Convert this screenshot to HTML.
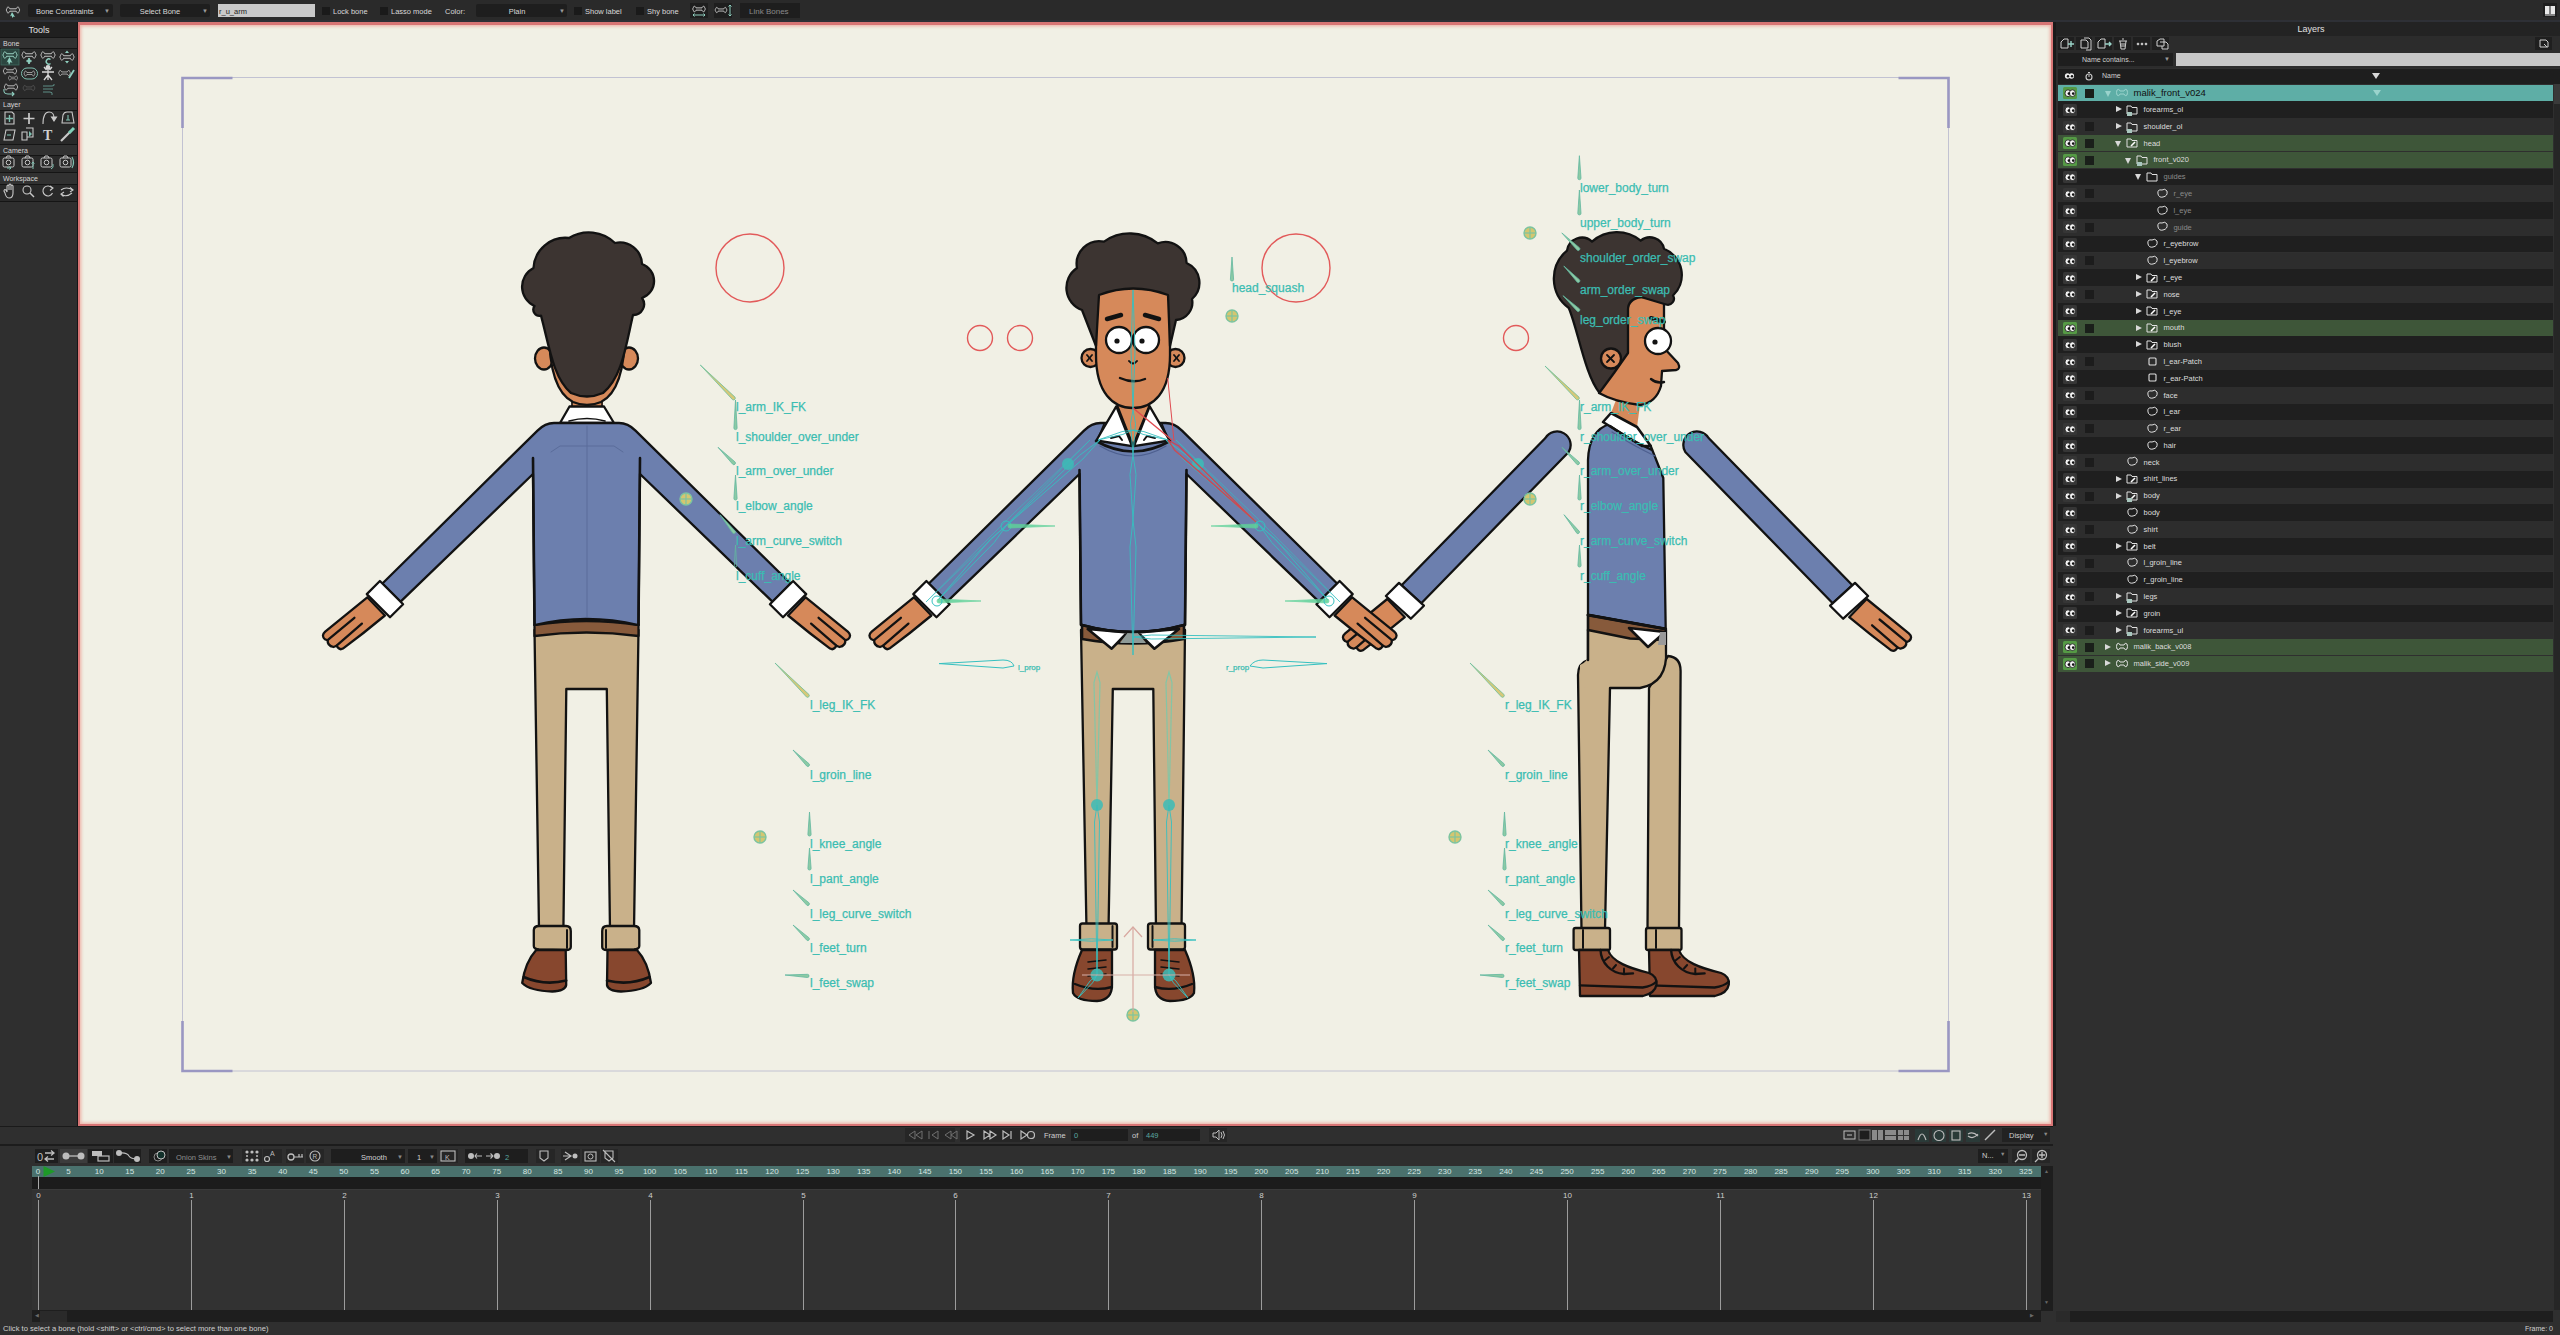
<!DOCTYPE html>
<html><head><meta charset="utf-8"><style>
html,body{margin:0;padding:0;}
body{width:2560px;height:1335px;position:relative;overflow:hidden;background:#2f2f2f;font-family:"Liberation Sans", sans-serif;}
</style></head><body>
<div style="position:absolute;left:0px;top:0px;width:2560px;height:20px;background:#2a2a2a;"></div><div style="position:absolute;left:0px;top:20px;width:2560px;height:2px;background:#2e3036;"></div><div style="position:absolute;left:28px;top:4px;width:85px;height:13px;background:#1e1e1e;border-radius:2px"></div><div style="position:absolute;left:36px;top:6.5px;font-size:7.5px;line-height:9.5px;color:#d8d8d8;white-space:nowrap;">Bone Constraints</div><div style="position:absolute;left:104px;top:6.5px;font-size:6px;line-height:8px;color:#9a9a9a;white-space:nowrap;">&#9660;</div><div style="position:absolute;left:120px;top:4px;width:90px;height:13px;background:#1e1e1e;border-radius:2px"></div><div style="position:absolute;left:120.0px;top:6.5px;width:80px;text-align:center;font-size:7.5px;line-height:9.5px;color:#d8d8d8;white-space:nowrap;">Select Bone</div><div style="position:absolute;left:202px;top:6.5px;font-size:6px;line-height:8px;color:#9a9a9a;white-space:nowrap;">&#9660;</div><div style="position:absolute;left:218px;top:4px;width:97px;height:13px;background:#c9c9c9;"></div><div style="position:absolute;left:219px;top:6.5px;font-size:7.5px;line-height:9.5px;color:#222;white-space:nowrap;">r_u_arm</div><div style="position:absolute;left:322px;top:6.5px;width:8px;height:8px;background:#1a1a1a;"></div><div style="position:absolute;left:333px;top:6.5px;font-size:7.5px;line-height:9.5px;color:#d8d8d8;white-space:nowrap;">Lock bone</div><div style="position:absolute;left:380px;top:6.5px;width:8px;height:8px;background:#1a1a1a;"></div><div style="position:absolute;left:391px;top:6.5px;font-size:7.5px;line-height:9.5px;color:#d8d8d8;white-space:nowrap;">Lasso mode</div><div style="position:absolute;left:574px;top:6.5px;width:8px;height:8px;background:#1a1a1a;"></div><div style="position:absolute;left:585px;top:6.5px;font-size:7.5px;line-height:9.5px;color:#d8d8d8;white-space:nowrap;">Show label</div><div style="position:absolute;left:636px;top:6.5px;width:8px;height:8px;background:#1a1a1a;"></div><div style="position:absolute;left:647px;top:6.5px;font-size:7.5px;line-height:9.5px;color:#d8d8d8;white-space:nowrap;">Shy bone</div><div style="position:absolute;left:445px;top:6.5px;font-size:7.5px;line-height:9.5px;color:#d8d8d8;white-space:nowrap;">Color:</div><div style="position:absolute;left:476px;top:4px;width:91px;height:13px;background:#1e1e1e;border-radius:2px"></div><div style="position:absolute;left:487.0px;top:6.5px;width:60px;text-align:center;font-size:7.5px;line-height:9.5px;color:#d8d8d8;white-space:nowrap;">Plain</div><div style="position:absolute;left:559px;top:6.5px;font-size:6px;line-height:8px;color:#9a9a9a;white-space:nowrap;">&#9660;</div><div style="position:absolute;left:690px;top:3px;width:18px;height:15px;background:#1e1e1e;"></div><div style="position:absolute;left:714px;top:3px;width:18px;height:15px;background:#1e1e1e;"></div><div style="position:absolute;left:740px;top:3px;width:60px;height:15px;background:#1e1e1e;"></div><div style="position:absolute;left:749px;top:6.5px;font-size:8px;line-height:10px;color:#8a8a8a;white-space:nowrap;">Link Bones</div><div style="position:absolute;left:2543px;top:3px;width:14px;height:14px;background:#1e1e1e;"></div><svg style="position:absolute;left:5px;top:4px" width="18" height="14"><path transform="translate(8,6) scale(0.8)" d="M-4,-1.5 L4,-1.5 C4.5,-4 7.5,-4.5 7.5,-2 C8.5,-1 8.5,1 7.5,2 C7.5,4.5 4.5,4 4,1.5 L-4,1.5 C-4.5,4 -7.5,4.5 -7.5,2 C-8.5,1 -8.5,-1 -7.5,-2 C-7.5,-4.5 -4.5,-4 -4,-1.5 Z" fill="none" stroke="#c9c9c9" stroke-width="1.2"/><path d="M7,8 L10,13 L8.5,12.5 L7.5,14 L6.5,11.5 L5,12.5 Z" fill="#8fd0c0"/></svg><svg style="position:absolute;left:690px;top:3px" width="44" height="15"><path transform="translate(9,6) scale(0.75)" d="M-4,-1.5 L4,-1.5 C4.5,-4 7.5,-4.5 7.5,-2 C8.5,-1 8.5,1 7.5,2 C7.5,4.5 4.5,4 4,1.5 L-4,1.5 C-4.5,4 -7.5,4.5 -7.5,2 C-8.5,1 -8.5,-1 -7.5,-2 C-7.5,-4.5 -4.5,-4 -4,-1.5 Z" fill="none" stroke="#c9c9c9" stroke-width="1.3"/><path d="M3,12 L15,12 M4.5,10.5 L3,12 L4.5,13.5 M13.5,10.5 L15,12 L13.5,13.5" stroke="#8fd0c0" fill="none" stroke-width="1"/><path transform="translate(31,7) scale(0.7)" d="M-4,-1.5 L4,-1.5 C4.5,-4 7.5,-4.5 7.5,-2 C8.5,-1 8.5,1 7.5,2 C7.5,4.5 4.5,4 4,1.5 L-4,1.5 C-4.5,4 -7.5,4.5 -7.5,2 C-8.5,1 -8.5,-1 -7.5,-2 C-7.5,-4.5 -4.5,-4 -4,-1.5 Z" fill="none" stroke="#c9c9c9" stroke-width="1.3"/><path d="M40,2 L40,13 M38.5,3.5 L40,2 L41.5,3.5 M38.5,11.5 L40,13 L41.5,11.5" stroke="#8fd0c0" fill="none" stroke-width="1"/></svg><svg style="position:absolute;left:2543px;top:3px" width="14" height="14"><rect x="0" y="0" width="14" height="14" fill="#1e1e1e"/><path d="M2,3 L6.5,3 L6.5,11 L2,11 Z M7.5,3 L12,3 L12,11 L7.5,11 Z" fill="#e8e8e8"/><path d="M2,12 L12,12" stroke="#e8e8e8"/></svg><div style="position:absolute;left:0px;top:22px;width:77px;height:1104px;background:#2f2f2f;"></div><div style="position:absolute;left:0px;top:22px;width:77px;height:15px;background:#202020;"></div><div style="position:absolute;left:4.0px;top:25px;width:70px;text-align:center;font-size:9px;line-height:11px;color:#e0e0e0;white-space:nowrap;">Tools</div><div style="position:absolute;left:77px;top:22px;width:1px;height:1104px;background:#161616;"></div><div style="position:absolute;left:0px;top:37px;width:77px;height:1px;background:#151515;"></div><div style="position:absolute;left:0px;top:38px;width:77px;height:10px;background:#313131;"></div><div style="position:absolute;left:3px;top:38.5px;font-size:7px;line-height:9px;color:#d6d6d6;white-space:nowrap;">Bone</div><div style="position:absolute;left:0px;top:48px;width:77px;height:1px;background:#151515;"></div><div style="position:absolute;left:0px;top:49px;width:77px;height:49px;background:#292929;"></div><div style="position:absolute;left:0px;top:98px;width:77px;height:1px;background:#151515;"></div><div style="position:absolute;left:0px;top:99px;width:77px;height:11px;background:#313131;"></div><div style="position:absolute;left:3px;top:99.5px;font-size:7px;line-height:9px;color:#d6d6d6;white-space:nowrap;">Layer</div><div style="position:absolute;left:0px;top:110px;width:77px;height:1px;background:#151515;"></div><div style="position:absolute;left:0px;top:111px;width:77px;height:33px;background:#292929;"></div><div style="position:absolute;left:0px;top:144px;width:77px;height:1px;background:#151515;"></div><div style="position:absolute;left:0px;top:145px;width:77px;height:10px;background:#313131;"></div><div style="position:absolute;left:3px;top:145.5px;font-size:7px;line-height:9px;color:#d6d6d6;white-space:nowrap;">Camera</div><div style="position:absolute;left:0px;top:155px;width:77px;height:1px;background:#151515;"></div><div style="position:absolute;left:0px;top:156px;width:77px;height:16px;background:#292929;"></div><div style="position:absolute;left:0px;top:172px;width:77px;height:1px;background:#151515;"></div><div style="position:absolute;left:0px;top:173px;width:77px;height:11px;background:#313131;"></div><div style="position:absolute;left:3px;top:173.5px;font-size:7px;line-height:9px;color:#d6d6d6;white-space:nowrap;">Workspace</div><div style="position:absolute;left:0px;top:184px;width:77px;height:1px;background:#151515;"></div><div style="position:absolute;left:0px;top:185px;width:77px;height:16px;background:#292929;"></div><div style="position:absolute;left:0px;top:201px;width:77px;height:1px;background:#151515;"></div><svg style="position:absolute;left:0;top:0" width="78" height="205"><rect x="1" y="49" width="18" height="16" fill="#2c4640" stroke="#3f6a60" stroke-width="0.8"/><path transform="translate(10,55) scale(0.85)" d="M-4,-1.5 L4,-1.5 C4.5,-4 7.5,-4.5 7.5,-2 C8.5,-1 8.5,1 7.5,2 C7.5,4.5 4.5,4 4,1.5 L-4,1.5 C-4.5,4 -7.5,4.5 -7.5,2 C-8.5,1 -8.5,-1 -7.5,-2 C-7.5,-4.5 -4.5,-4 -4,-1.5 Z" fill="none" stroke="#9fd8c8" stroke-width="1.1"/><path d="M9.5,57 L12.5,63 L10.5,62 L9,65 L8,61.5 L6.5,62.5 Z" fill="#8fd0c0"/><path transform="translate(29,55) scale(0.85)" d="M-4,-1.5 L4,-1.5 C4.5,-4 7.5,-4.5 7.5,-2 C8.5,-1 8.5,1 7.5,2 C7.5,4.5 4.5,4 4,1.5 L-4,1.5 C-4.5,4 -7.5,4.5 -7.5,2 C-8.5,1 -8.5,-1 -7.5,-2 C-7.5,-4.5 -4.5,-4 -4,-1.5 Z" fill="none" stroke="#c9c9c9" stroke-width="1.1"/><path d="M29,58 L30.5,61 L29,64 L27.5,61 Z M26,61 L32,61" fill="#8fd0c0" stroke="#8fd0c0" stroke-width="1"/><path transform="translate(48,55) scale(0.85)" d="M-4,-1.5 L4,-1.5 C4.5,-4 7.5,-4.5 7.5,-2 C8.5,-1 8.5,1 7.5,2 C7.5,4.5 4.5,4 4,1.5 L-4,1.5 C-4.5,4 -7.5,4.5 -7.5,2 C-8.5,1 -8.5,-1 -7.5,-2 C-7.5,-4.5 -4.5,-4 -4,-1.5 Z" fill="none" stroke="#c9c9c9" stroke-width="1.1"/><path d="M50.5,59.5 A2.6,2.6 0 1 0 50.5,63.5" fill="none" stroke="#8fd0c0" stroke-width="1.4"/><path transform="translate(67,57) scale(0.85)" d="M-4,-1.5 L4,-1.5 C4.5,-4 7.5,-4.5 7.5,-2 C8.5,-1 8.5,1 7.5,2 C7.5,4.5 4.5,4 4,1.5 L-4,1.5 C-4.5,4 -7.5,4.5 -7.5,2 C-8.5,1 -8.5,-1 -7.5,-2 C-7.5,-4.5 -4.5,-4 -4,-1.5 Z" fill="none" stroke="#c9c9c9" stroke-width="1.1"/><path d="M67,50.5 L69,53 L65,53 Z M67,63.5 L69,61 L65,61 Z" fill="#8fd0c0"/><path transform="translate(10,71) scale(0.8)" d="M-4,-1.5 L4,-1.5 C4.5,-4 7.5,-4.5 7.5,-2 C8.5,-1 8.5,1 7.5,2 C7.5,4.5 4.5,4 4,1.5 L-4,1.5 C-4.5,4 -7.5,4.5 -7.5,2 C-8.5,1 -8.5,-1 -7.5,-2 C-7.5,-4.5 -4.5,-4 -4,-1.5 Z" fill="none" stroke="#c9c9c9" stroke-width="1.1"/><path transform="translate(13,78) scale(0.55)" d="M-4,-1.5 L4,-1.5 C4.5,-4 7.5,-4.5 7.5,-2 C8.5,-1 8.5,1 7.5,2 C7.5,4.5 4.5,4 4,1.5 L-4,1.5 C-4.5,4 -7.5,4.5 -7.5,2 C-8.5,1 -8.5,-1 -7.5,-2 C-7.5,-4.5 -4.5,-4 -4,-1.5 Z" fill="none" stroke="#c9c9c9" stroke-width="1.1"/><rect x="21.5" y="68" width="16" height="11" rx="5.5" fill="none" stroke="#7fbfb0" stroke-width="1"/><path transform="translate(29.5,73.5) scale(0.65)" d="M-4,-1.5 L4,-1.5 C4.5,-4 7.5,-4.5 7.5,-2 C8.5,-1 8.5,1 7.5,2 C7.5,4.5 4.5,4 4,1.5 L-4,1.5 C-4.5,4 -7.5,4.5 -7.5,2 C-8.5,1 -8.5,-1 -7.5,-2 C-7.5,-4.5 -4.5,-4 -4,-1.5 Z" fill="none" stroke="#c9c9c9" stroke-width="1.1"/><g stroke="#d8d8d8" stroke-width="1.3" fill="none"><circle cx="48" cy="67.5" r="1.8" fill="#d8d8d8"/><path d="M42,72 L54,72 M48,70 L48,80 M48,75 L44,80 M48,75 L52,80 M44,67 L46.5,70 M52,67 L49.5,70"/></g><path transform="translate(64.5,73) scale(0.7)" d="M-4,-1.5 L4,-1.5 C4.5,-4 7.5,-4.5 7.5,-2 C8.5,-1 8.5,1 7.5,2 C7.5,4.5 4.5,4 4,1.5 L-4,1.5 C-4.5,4 -7.5,4.5 -7.5,2 C-8.5,1 -8.5,-1 -7.5,-2 C-7.5,-4.5 -4.5,-4 -4,-1.5 Z" fill="none" stroke="#c9c9c9" stroke-width="1.1"/><path d="M69,78 L74,70" stroke="#8fcfc0" stroke-width="1.8"/><path transform="translate(11,87) scale(0.8)" d="M-4,-1.5 L4,-1.5 C4.5,-4 7.5,-4.5 7.5,-2 C8.5,-1 8.5,1 7.5,2 C7.5,4.5 4.5,4 4,1.5 L-4,1.5 C-4.5,4 -7.5,4.5 -7.5,2 C-8.5,1 -8.5,-1 -7.5,-2 C-7.5,-4.5 -4.5,-4 -4,-1.5 Z" fill="none" stroke="#c9c9c9" stroke-width="1.1"/><path d="M4,89 Q3,94 8,94 L14,94 M12,92 L14,94 L12,96" fill="none" stroke="#8fcfc0" stroke-width="1.1"/><g opacity="0.3"><path transform="translate(29,88) scale(0.7)" d="M-4,-1.5 L4,-1.5 C4.5,-4 7.5,-4.5 7.5,-2 C8.5,-1 8.5,1 7.5,2 C7.5,4.5 4.5,4 4,1.5 L-4,1.5 C-4.5,4 -7.5,4.5 -7.5,2 C-8.5,1 -8.5,-1 -7.5,-2 C-7.5,-4.5 -4.5,-4 -4,-1.5 Z" fill="none" stroke="#c9c9c9" stroke-width="1.1"/></g><path d="M43,86 L52,86 Q55,86 54,84 M43,89 L53,89 M43,92 L50,92 Q53,92 52,95" fill="none" stroke="#5f8f87" stroke-width="1"/><g fill="none" stroke="#c9c9c9" stroke-width="1.1"><path d="M5,112 L12,112 L14,114 L14,124 L5,124 Z"/><path d="M9.5,115 L9.5,122 M6,118.5 L13,118.5" stroke="#7fbfb0" stroke-width="1.4"/><path d="M29,113 L29,124 M23.5,118.5 L34.5,118.5" stroke-width="1.7"/><path d="M43,124 Q43,112 49,112 Q54,112 54,118" /><path d="M51.5,117 L54,121 L56.5,117 Z" fill="#c9c9c9"/><path d="M62,123 L63,115 Q64,112 67,112 L72,112 L74,123 Z"/><path d="M68,115 L68,120 M66,120 L70,120" stroke="#7fbfb0"/><path d="M4,140 L6,130 L15,130 L13,140 Z"/><path d="M7,135 L11,135" stroke="#7fbfb0"/><path d="M22,132 L27,132 L27,140 L22,140 Z M26,128 L33,128 L33,137 L27,137"/><path d="M29,131 L32,134 L29,137 Z" fill="#7fbfb0" stroke="none"/></g><text x="43" y="140" font-family="Liberation Serif, serif" font-size="14" font-weight="bold" fill="#d0d0d0">T</text><path d="M61,141 L71,131" stroke="#c9c9c9" stroke-width="2.2"/><path d="M69,133 L74,128" stroke="#7fcfb8" stroke-width="3"/><g fill="none" stroke="#c9c9c9" stroke-width="1"><rect x="3" y="158" width="11" height="9" rx="1.5"/><circle cx="8.5" cy="162.5" r="2.3"/><path d="M6,158 L7,156 L10,156 L11,158"/></g><g fill="none" stroke="#c9c9c9" stroke-width="1"><rect x="22" y="158" width="11" height="9" rx="1.5"/><circle cx="27.5" cy="162.5" r="2.3"/><path d="M25,158 L26,156 L29,156 L30,158"/></g><g fill="none" stroke="#c9c9c9" stroke-width="1"><rect x="41" y="158" width="11" height="9" rx="1.5"/><circle cx="46.5" cy="162.5" r="2.3"/><path d="M44,158 L45,156 L48,156 L49,158"/></g><g fill="none" stroke="#c9c9c9" stroke-width="1"><rect x="60" y="158" width="11" height="9" rx="1.5"/><circle cx="65.5" cy="162.5" r="2.3"/><path d="M63,158 L64,156 L67,156 L68,158"/></g><path d="M7,168 L11,168 M9.5,166.5 L11,168 L9.5,169.5" stroke="#7fbfb0" fill="none"/><path d="M33,162 L33,169 M31.5,163.5 L33,162 L34.5,163.5" stroke="#7fbfb0" fill="none"/><path d="M51,169 Q54,168 53,164" stroke="#7fbfb0" fill="none"/><path d="M72,157 Q75,162.5 72,168" stroke="#7fbfb0" fill="none" stroke-width="1.2"/><g fill="none" stroke="#c9c9c9" stroke-width="1.1"><path d="M5,193 L4,191 Q4,189 6,190 L7,192 L7,186 Q8,184 9,186 L9,190 L9,185 Q10,183 11,185 L11,190 L11,186 Q12,184 13,186 L13,193 Q13,198 9,198 Q6,198 5,193 Z"/><circle cx="27" cy="190" r="4"/><path d="M30,193 L34,197" stroke-width="1.5"/><path d="M52,188 A5,5 0 1 0 52.5,193"/><path d="M50,186 L53,188 L50,190.5" /><path d="M61,194 Q66,198 72,193 M61,190 Q66,186 73,190"/><path d="M70,187.5 L73,190 L70,192" /><path d="M63.5,196.5 L61,194 L64,192"/></g></svg><div style="position:absolute;left:78px;top:22px;width:1975px;height:1104px;background:#f1f0e5;border:2.5px solid #d87575;box-sizing:border-box;border-top-width:3.5px;box-shadow:inset 0 0 3px 1.5px rgba(238,165,155,0.75)"></div><div style="position:absolute;left:2053px;top:22px;width:507px;height:1298px;background:#2f2f2f;"></div><div style="position:absolute;left:2053px;top:22px;width:3px;height:1104px;background:#1a1a1a;"></div><div style="position:absolute;left:2056px;top:22px;width:504px;height:14px;background:#232323;"></div><div style="position:absolute;left:2271.0px;top:24px;width:80px;text-align:center;font-size:9px;line-height:11px;color:#e0e0e0;white-space:nowrap;">Layers</div><div style="position:absolute;left:2056px;top:36px;width:504px;height:16px;background:#2c2c2c;"></div><div style="position:absolute;left:2058px;top:37px;width:16px;height:13px;background:#1f1f1f;"></div><div style="position:absolute;left:2076px;top:37px;width:16px;height:13px;background:#1f1f1f;"></div><div style="position:absolute;left:2095px;top:37px;width:17px;height:13px;background:#1f1f1f;"></div><div style="position:absolute;left:2114px;top:37px;width:17px;height:13px;background:#1f1f1f;"></div><div style="position:absolute;left:2133px;top:37px;width:17px;height:13px;background:#1f1f1f;"></div><div style="position:absolute;left:2152px;top:37px;width:17px;height:13px;background:#1f1f1f;"></div><div style="position:absolute;left:2535px;top:37px;width:17px;height:13px;background:#1f1f1f;"></div><svg style="position:absolute;left:2056px;top:36px" width="120" height="16" fill="none" stroke="#cfcfcf" stroke-width="1"><path d="M5,12 L5,6 L8,3 L12,3 L12,12 Z"/><path d="M12,8 L18,8 M15,5 L15,11" stroke="#9ad3c8" stroke-width="1.4"/><path d="M25,4 L30,4 L32,6 L32,12 L25,12 Z M28,2 L33,2 L35,4 L35,14 L30,14"/><path d="M42,12 L42,6 L45,3 L49,3 L49,12 Z"/><path d="M49,8 L55,8 M53,6 L55,8 L53,10" stroke="#9ad3c8" stroke-width="1.4"/><path d="M63,5 L71,5 M64,5 L65,13 L69,13 L70,5 M66,3 L68,3 M66,7 L66,11 M68,7 L68,11"/><circle cx="82" cy="8" r="0.9" fill="#cfcfcf"/><circle cx="86" cy="8" r="0.9" fill="#cfcfcf"/><circle cx="90" cy="8" r="0.9" fill="#cfcfcf"/><path d="M101,10 L101,5 L104,3 L108,3 L108,10 Z M104,6 L110,6 L112,8 L112,13 L106,13 L106,10"/></svg><svg style="position:absolute;left:2537px;top:37px" width="14" height="13" fill="none" stroke="#cfcfcf" stroke-width="1"><path d="M3,3 L9,3 L11,5 L11,10 L3,10 Z M7,7 L10,10"/></svg><div style="position:absolute;left:2056px;top:52px;width:504px;height:16px;background:#2c2c2c;"></div><div style="position:absolute;left:2058px;top:53px;width:115px;height:13px;background:#1e1e1e;"></div><div style="position:absolute;left:2082px;top:55px;font-size:7px;line-height:9px;color:#d0d0d0;white-space:nowrap;">Name contains...</div><div style="position:absolute;left:2164px;top:55px;font-size:6px;line-height:8px;color:#9a9a9a;white-space:nowrap;">&#9660;</div><div style="position:absolute;left:2176px;top:53px;width:384px;height:13px;background:#c7c7c7;"></div><div style="position:absolute;left:2058px;top:69px;width:502px;height:15px;background:#1e1e1e;"></div><div style="position:absolute;left:2554px;top:84px;width:6px;height:1226px;background:#262626;"></div><div style="position:absolute;left:2554px;top:84px;width:6px;height:20px;background:#3a3a3a;"></div><div style="position:absolute;left:2102px;top:71px;font-size:7px;line-height:9px;color:#cfcfcf;white-space:nowrap;">Name</div><svg style="position:absolute;left:2063px;top:70px" width="34" height="12"><ellipse cx="4.5" cy="6" rx="2.6" ry="2.8" fill="#eee"/><ellipse cx="8.5" cy="6" rx="2.6" ry="2.8" fill="#eee"/><circle cx="5" cy="6.3" r="1.2" fill="#111"/><circle cx="9" cy="6.3" r="1.2" fill="#111"/><circle cx="26" cy="7" r="3" fill="none" stroke="#ccc" stroke-width="1.1"/><path d="M25,2.5 L27,2.5 M26,7 L26,5" stroke="#ccc"/></svg><div style="position:absolute;left:2372px;top:73px;width:0;height:0;border-left:4px solid transparent;border-right:4px solid transparent;border-top:6px solid #d8d8d8"></div><div style="position:absolute;left:2058px;top:84.6px;width:495px;height:16.8px;background:#5eaea6;"></div><div style="position:absolute;left:2063px;top:86.99499999999999px;width:14px;height:12px;background:#559a45;border-radius:1.5px"></div><svg style="position:absolute;left:2063px;top:86.99499999999999px" width="14" height="12"><ellipse cx="5" cy="6.2" rx="3" ry="3.4" fill="#f4f4f4" stroke="#111" stroke-width="0.8"/><ellipse cx="9.4" cy="6.2" rx="3" ry="3.4" fill="#f4f4f4" stroke="#111" stroke-width="0.8"/><circle cx="5.9" cy="6.6" r="1.3" fill="#111"/><circle cx="10.2" cy="6.6" r="1.3" fill="#111"/></svg><div style="position:absolute;left:2085px;top:88.5px;width:9px;height:9px;background:#1a1f1a;"></div><div style="position:absolute;left:2104.5px;top:90.5px;width:0;height:0;border-left:3.5px solid transparent;border-right:3.5px solid transparent;border-top:6px solid #9ad3cc"></div><svg style="position:absolute;left:2116px;top:86.99499999999999px" width="13" height="13"><path d="M1,3 Q3,1 4,4 L8,4 Q9,1 11,3 Q12,5.5 11,8 Q9,10 8,7 L4,7 Q3,10 1,8 Q0,5.5 1,3 Z" fill="none" stroke="#9ad3cc" stroke-width="1"/></svg><div style="position:absolute;left:2133.5px;top:87.2px;font-size:9.5px;line-height:11.5px;color:#111;white-space:nowrap;">malik_front_v024</div><div style="position:absolute;left:2373px;top:90.0px;width:0;height:0;border-left:4px solid transparent;border-right:4px solid transparent;border-top:6px solid #9ad3cc"></div><div style="position:absolute;left:2058px;top:101.4px;width:495px;height:16.8px;background:#1f1f1f;"></div><div style="position:absolute;left:2063px;top:103.78499999999998px;width:14px;height:12px;background:#363636;border-radius:1.5px"></div><svg style="position:absolute;left:2063px;top:103.78499999999998px" width="14" height="12"><ellipse cx="5" cy="6.2" rx="3" ry="3.4" fill="#f4f4f4" stroke="#111" stroke-width="0.8"/><ellipse cx="9.4" cy="6.2" rx="3" ry="3.4" fill="#f4f4f4" stroke="#111" stroke-width="0.8"/><circle cx="5.9" cy="6.6" r="1.3" fill="#111"/><circle cx="10.2" cy="6.6" r="1.3" fill="#111"/></svg><div style="position:absolute;left:2115.7px;top:106.3px;width:0;height:0;border-top:3.5px solid transparent;border-bottom:3.5px solid transparent;border-left:6px solid #d8d8d8"></div><svg style="position:absolute;left:2125.7px;top:103.78499999999998px" width="13" height="13"><path d="M1,2 L5,2 L6,3.5 L11,3.5 L11,10 L1,10 Z" fill="none" stroke="#e0e0e0" stroke-width="1"/><rect x="1" y="8" width="5" height="4" fill="#a9c7bf"/></svg><div style="position:absolute;left:2143.6px;top:105.0px;font-size:7.5px;line-height:9.5px;color:#dddddd;white-space:nowrap;">forearms_ol</div><div style="position:absolute;left:2058px;top:118.2px;width:495px;height:16.8px;background:#2d2d2d;"></div><div style="position:absolute;left:2063px;top:120.57499999999999px;width:14px;height:12px;background:#363636;border-radius:1.5px"></div><svg style="position:absolute;left:2063px;top:120.57499999999999px" width="14" height="12"><ellipse cx="5" cy="6.2" rx="3" ry="3.4" fill="#f4f4f4" stroke="#111" stroke-width="0.8"/><ellipse cx="9.4" cy="6.2" rx="3" ry="3.4" fill="#f4f4f4" stroke="#111" stroke-width="0.8"/><circle cx="5.9" cy="6.6" r="1.3" fill="#111"/><circle cx="10.2" cy="6.6" r="1.3" fill="#111"/></svg><div style="position:absolute;left:2085px;top:122.1px;width:9px;height:9px;background:#1c1c1c;"></div><div style="position:absolute;left:2115.7px;top:123.1px;width:0;height:0;border-top:3.5px solid transparent;border-bottom:3.5px solid transparent;border-left:6px solid #d8d8d8"></div><svg style="position:absolute;left:2125.7px;top:120.57499999999999px" width="13" height="13"><path d="M1,2 L5,2 L6,3.5 L11,3.5 L11,10 L1,10 Z" fill="none" stroke="#e0e0e0" stroke-width="1"/><rect x="1" y="8" width="5" height="4" fill="#a9c7bf"/></svg><div style="position:absolute;left:2143.6px;top:121.8px;font-size:7.5px;line-height:9.5px;color:#dddddd;white-space:nowrap;">shoulder_ol</div><div style="position:absolute;left:2058px;top:135.0px;width:495px;height:16.0px;background:#3e5639;"></div><div style="position:absolute;left:2063px;top:137.365px;width:14px;height:12px;background:#559a45;border-radius:1.5px"></div><svg style="position:absolute;left:2063px;top:137.365px" width="14" height="12"><ellipse cx="5" cy="6.2" rx="3" ry="3.4" fill="#f4f4f4" stroke="#111" stroke-width="0.8"/><ellipse cx="9.4" cy="6.2" rx="3" ry="3.4" fill="#f4f4f4" stroke="#111" stroke-width="0.8"/><circle cx="5.9" cy="6.6" r="1.3" fill="#111"/><circle cx="10.2" cy="6.6" r="1.3" fill="#111"/></svg><div style="position:absolute;left:2085px;top:138.9px;width:9px;height:9px;background:#1a1f1a;"></div><div style="position:absolute;left:2115.2px;top:140.9px;width:0;height:0;border-left:3.5px solid transparent;border-right:3.5px solid transparent;border-top:6px solid #d8d8d8"></div><svg style="position:absolute;left:2125.7px;top:137.365px" width="13" height="13"><path d="M1,2 L5,2 L6,3.5 L11,3.5 L11,10 L1,10 Z" fill="none" stroke="#e0e0e0" stroke-width="1"/><path d="M5,9 L9,5" stroke="#fff" stroke-width="1.6"/></svg><div style="position:absolute;left:2143.6px;top:138.6px;font-size:7.5px;line-height:9.5px;color:#dddddd;white-space:nowrap;">head</div><div style="position:absolute;left:2058px;top:151.8px;width:495px;height:16.0px;background:#3e5639;"></div><div style="position:absolute;left:2063px;top:154.155px;width:14px;height:12px;background:#559a45;border-radius:1.5px"></div><svg style="position:absolute;left:2063px;top:154.155px" width="14" height="12"><ellipse cx="5" cy="6.2" rx="3" ry="3.4" fill="#f4f4f4" stroke="#111" stroke-width="0.8"/><ellipse cx="9.4" cy="6.2" rx="3" ry="3.4" fill="#f4f4f4" stroke="#111" stroke-width="0.8"/><circle cx="5.9" cy="6.6" r="1.3" fill="#111"/><circle cx="10.2" cy="6.6" r="1.3" fill="#111"/></svg><div style="position:absolute;left:2085px;top:155.7px;width:9px;height:9px;background:#1a1f1a;"></div><div style="position:absolute;left:2125.3px;top:157.7px;width:0;height:0;border-left:3.5px solid transparent;border-right:3.5px solid transparent;border-top:6px solid #d8d8d8"></div><svg style="position:absolute;left:2135.7999999999997px;top:154.155px" width="13" height="13"><path d="M1,2 L5,2 L6,3.5 L11,3.5 L11,10 L1,10 Z" fill="none" stroke="#e0e0e0" stroke-width="1"/><rect x="1" y="8" width="5" height="4" fill="#a9c7bf"/></svg><div style="position:absolute;left:2153.5px;top:155.4px;font-size:7.5px;line-height:9.5px;color:#dddddd;white-space:nowrap;">front_v020</div><div style="position:absolute;left:2058px;top:168.5px;width:495px;height:16.8px;background:#1f1f1f;"></div><div style="position:absolute;left:2063px;top:170.945px;width:14px;height:12px;background:#363636;border-radius:1.5px"></div><svg style="position:absolute;left:2063px;top:170.945px" width="14" height="12"><ellipse cx="5" cy="6.2" rx="3" ry="3.4" fill="#f4f4f4" stroke="#111" stroke-width="0.8"/><ellipse cx="9.4" cy="6.2" rx="3" ry="3.4" fill="#f4f4f4" stroke="#111" stroke-width="0.8"/><circle cx="5.9" cy="6.6" r="1.3" fill="#111"/><circle cx="10.2" cy="6.6" r="1.3" fill="#111"/></svg><div style="position:absolute;left:2135.4px;top:174.4px;width:0;height:0;border-left:3.5px solid transparent;border-right:3.5px solid transparent;border-top:6px solid #d8d8d8"></div><svg style="position:absolute;left:2145.8999999999996px;top:170.945px" width="13" height="13"><path d="M1,2 L5,2 L6,3.5 L11,3.5 L11,10 L1,10 Z" fill="none" stroke="#e0e0e0" stroke-width="1"/></svg><div style="position:absolute;left:2163.5px;top:172.2px;font-size:7.5px;line-height:9.5px;color:#8a8a8a;white-space:nowrap;">guides</div><div style="position:absolute;left:2058px;top:185.3px;width:495px;height:16.8px;background:#2d2d2d;"></div><div style="position:absolute;left:2063px;top:187.73499999999999px;width:14px;height:12px;background:#363636;border-radius:1.5px"></div><svg style="position:absolute;left:2063px;top:187.73499999999999px" width="14" height="12"><ellipse cx="5" cy="6.2" rx="3" ry="3.4" fill="#f4f4f4" stroke="#111" stroke-width="0.8"/><ellipse cx="9.4" cy="6.2" rx="3" ry="3.4" fill="#f4f4f4" stroke="#111" stroke-width="0.8"/><circle cx="5.9" cy="6.6" r="1.3" fill="#111"/><circle cx="10.2" cy="6.6" r="1.3" fill="#111"/></svg><div style="position:absolute;left:2085px;top:189.2px;width:9px;height:9px;background:#1c1c1c;"></div><svg style="position:absolute;left:2156.0px;top:187.73499999999999px" width="13" height="13"><path d="M2,6 Q1,1 6,2 Q9,0 11,3 Q12,8 7,9 Q3,10 2,6 Z" fill="none" stroke="#e0e0e0" stroke-width="1"/></svg><div style="position:absolute;left:2173.4px;top:189.0px;font-size:7.5px;line-height:9.5px;color:#8a8a8a;white-space:nowrap;">r_eye</div><div style="position:absolute;left:2058px;top:202.1px;width:495px;height:16.8px;background:#1f1f1f;"></div><div style="position:absolute;left:2063px;top:204.525px;width:14px;height:12px;background:#363636;border-radius:1.5px"></div><svg style="position:absolute;left:2063px;top:204.525px" width="14" height="12"><ellipse cx="5" cy="6.2" rx="3" ry="3.4" fill="#f4f4f4" stroke="#111" stroke-width="0.8"/><ellipse cx="9.4" cy="6.2" rx="3" ry="3.4" fill="#f4f4f4" stroke="#111" stroke-width="0.8"/><circle cx="5.9" cy="6.6" r="1.3" fill="#111"/><circle cx="10.2" cy="6.6" r="1.3" fill="#111"/></svg><svg style="position:absolute;left:2156.0px;top:204.525px" width="13" height="13"><path d="M2,6 Q1,1 6,2 Q9,0 11,3 Q12,8 7,9 Q3,10 2,6 Z" fill="none" stroke="#e0e0e0" stroke-width="1"/></svg><div style="position:absolute;left:2173.4px;top:205.8px;font-size:7.5px;line-height:9.5px;color:#8a8a8a;white-space:nowrap;">l_eye</div><div style="position:absolute;left:2058px;top:218.9px;width:495px;height:16.8px;background:#2d2d2d;"></div><div style="position:absolute;left:2063px;top:221.315px;width:14px;height:12px;background:#363636;border-radius:1.5px"></div><svg style="position:absolute;left:2063px;top:221.315px" width="14" height="12"><ellipse cx="5" cy="6.2" rx="3" ry="3.4" fill="#f4f4f4" stroke="#111" stroke-width="0.8"/><ellipse cx="9.4" cy="6.2" rx="3" ry="3.4" fill="#f4f4f4" stroke="#111" stroke-width="0.8"/><circle cx="5.9" cy="6.6" r="1.3" fill="#111"/><circle cx="10.2" cy="6.6" r="1.3" fill="#111"/></svg><div style="position:absolute;left:2085px;top:222.8px;width:9px;height:9px;background:#1c1c1c;"></div><svg style="position:absolute;left:2156.0px;top:221.315px" width="13" height="13"><path d="M2,6 Q1,1 6,2 Q9,0 11,3 Q12,8 7,9 Q3,10 2,6 Z" fill="none" stroke="#e0e0e0" stroke-width="1"/></svg><div style="position:absolute;left:2173.4px;top:222.6px;font-size:7.5px;line-height:9.5px;color:#8a8a8a;white-space:nowrap;">guide</div><div style="position:absolute;left:2058px;top:235.7px;width:495px;height:16.8px;background:#1f1f1f;"></div><div style="position:absolute;left:2063px;top:238.105px;width:14px;height:12px;background:#363636;border-radius:1.5px"></div><svg style="position:absolute;left:2063px;top:238.105px" width="14" height="12"><ellipse cx="5" cy="6.2" rx="3" ry="3.4" fill="#f4f4f4" stroke="#111" stroke-width="0.8"/><ellipse cx="9.4" cy="6.2" rx="3" ry="3.4" fill="#f4f4f4" stroke="#111" stroke-width="0.8"/><circle cx="5.9" cy="6.6" r="1.3" fill="#111"/><circle cx="10.2" cy="6.6" r="1.3" fill="#111"/></svg><svg style="position:absolute;left:2145.8999999999996px;top:238.105px" width="13" height="13"><path d="M2,6 Q1,1 6,2 Q9,0 11,3 Q12,8 7,9 Q3,10 2,6 Z" fill="none" stroke="#e0e0e0" stroke-width="1"/></svg><div style="position:absolute;left:2163.5px;top:239.4px;font-size:7.5px;line-height:9.5px;color:#dddddd;white-space:nowrap;">r_eyebrow</div><div style="position:absolute;left:2058px;top:252.5px;width:495px;height:16.8px;background:#2d2d2d;"></div><div style="position:absolute;left:2063px;top:254.89499999999998px;width:14px;height:12px;background:#363636;border-radius:1.5px"></div><svg style="position:absolute;left:2063px;top:254.89499999999998px" width="14" height="12"><ellipse cx="5" cy="6.2" rx="3" ry="3.4" fill="#f4f4f4" stroke="#111" stroke-width="0.8"/><ellipse cx="9.4" cy="6.2" rx="3" ry="3.4" fill="#f4f4f4" stroke="#111" stroke-width="0.8"/><circle cx="5.9" cy="6.6" r="1.3" fill="#111"/><circle cx="10.2" cy="6.6" r="1.3" fill="#111"/></svg><div style="position:absolute;left:2085px;top:256.4px;width:9px;height:9px;background:#1c1c1c;"></div><svg style="position:absolute;left:2145.8999999999996px;top:254.89499999999998px" width="13" height="13"><path d="M2,6 Q1,1 6,2 Q9,0 11,3 Q12,8 7,9 Q3,10 2,6 Z" fill="none" stroke="#e0e0e0" stroke-width="1"/></svg><div style="position:absolute;left:2163.5px;top:256.1px;font-size:7.5px;line-height:9.5px;color:#dddddd;white-space:nowrap;">l_eyebrow</div><div style="position:absolute;left:2058px;top:269.3px;width:495px;height:16.8px;background:#1f1f1f;"></div><div style="position:absolute;left:2063px;top:271.68499999999995px;width:14px;height:12px;background:#363636;border-radius:1.5px"></div><svg style="position:absolute;left:2063px;top:271.68499999999995px" width="14" height="12"><ellipse cx="5" cy="6.2" rx="3" ry="3.4" fill="#f4f4f4" stroke="#111" stroke-width="0.8"/><ellipse cx="9.4" cy="6.2" rx="3" ry="3.4" fill="#f4f4f4" stroke="#111" stroke-width="0.8"/><circle cx="5.9" cy="6.6" r="1.3" fill="#111"/><circle cx="10.2" cy="6.6" r="1.3" fill="#111"/></svg><div style="position:absolute;left:2135.9px;top:274.2px;width:0;height:0;border-top:3.5px solid transparent;border-bottom:3.5px solid transparent;border-left:6px solid #d8d8d8"></div><svg style="position:absolute;left:2145.8999999999996px;top:271.68499999999995px" width="13" height="13"><path d="M1,2 L5,2 L6,3.5 L11,3.5 L11,10 L1,10 Z" fill="none" stroke="#e0e0e0" stroke-width="1"/><path d="M5,9 L9,5" stroke="#fff" stroke-width="1.6"/></svg><div style="position:absolute;left:2163.5px;top:272.9px;font-size:7.5px;line-height:9.5px;color:#dddddd;white-space:nowrap;">r_eye</div><div style="position:absolute;left:2058px;top:286.1px;width:495px;height:16.8px;background:#2d2d2d;"></div><div style="position:absolute;left:2063px;top:288.47499999999997px;width:14px;height:12px;background:#363636;border-radius:1.5px"></div><svg style="position:absolute;left:2063px;top:288.47499999999997px" width="14" height="12"><ellipse cx="5" cy="6.2" rx="3" ry="3.4" fill="#f4f4f4" stroke="#111" stroke-width="0.8"/><ellipse cx="9.4" cy="6.2" rx="3" ry="3.4" fill="#f4f4f4" stroke="#111" stroke-width="0.8"/><circle cx="5.9" cy="6.6" r="1.3" fill="#111"/><circle cx="10.2" cy="6.6" r="1.3" fill="#111"/></svg><div style="position:absolute;left:2085px;top:290.0px;width:9px;height:9px;background:#1c1c1c;"></div><div style="position:absolute;left:2135.9px;top:291.0px;width:0;height:0;border-top:3.5px solid transparent;border-bottom:3.5px solid transparent;border-left:6px solid #d8d8d8"></div><svg style="position:absolute;left:2145.8999999999996px;top:288.47499999999997px" width="13" height="13"><path d="M1,2 L5,2 L6,3.5 L11,3.5 L11,10 L1,10 Z" fill="none" stroke="#e0e0e0" stroke-width="1"/><path d="M5,9 L9,5" stroke="#fff" stroke-width="1.6"/></svg><div style="position:absolute;left:2163.5px;top:289.7px;font-size:7.5px;line-height:9.5px;color:#dddddd;white-space:nowrap;">nose</div><div style="position:absolute;left:2058px;top:302.9px;width:495px;height:16.8px;background:#1f1f1f;"></div><div style="position:absolute;left:2063px;top:305.265px;width:14px;height:12px;background:#363636;border-radius:1.5px"></div><svg style="position:absolute;left:2063px;top:305.265px" width="14" height="12"><ellipse cx="5" cy="6.2" rx="3" ry="3.4" fill="#f4f4f4" stroke="#111" stroke-width="0.8"/><ellipse cx="9.4" cy="6.2" rx="3" ry="3.4" fill="#f4f4f4" stroke="#111" stroke-width="0.8"/><circle cx="5.9" cy="6.6" r="1.3" fill="#111"/><circle cx="10.2" cy="6.6" r="1.3" fill="#111"/></svg><div style="position:absolute;left:2135.9px;top:307.8px;width:0;height:0;border-top:3.5px solid transparent;border-bottom:3.5px solid transparent;border-left:6px solid #d8d8d8"></div><svg style="position:absolute;left:2145.8999999999996px;top:305.265px" width="13" height="13"><path d="M1,2 L5,2 L6,3.5 L11,3.5 L11,10 L1,10 Z" fill="none" stroke="#e0e0e0" stroke-width="1"/><path d="M5,9 L9,5" stroke="#fff" stroke-width="1.6"/></svg><div style="position:absolute;left:2163.5px;top:306.5px;font-size:7.5px;line-height:9.5px;color:#dddddd;white-space:nowrap;">l_eye</div><div style="position:absolute;left:2058px;top:319.7px;width:495px;height:16.0px;background:#3e5639;"></div><div style="position:absolute;left:2063px;top:322.05499999999995px;width:14px;height:12px;background:#559a45;border-radius:1.5px"></div><svg style="position:absolute;left:2063px;top:322.05499999999995px" width="14" height="12"><ellipse cx="5" cy="6.2" rx="3" ry="3.4" fill="#f4f4f4" stroke="#111" stroke-width="0.8"/><ellipse cx="9.4" cy="6.2" rx="3" ry="3.4" fill="#f4f4f4" stroke="#111" stroke-width="0.8"/><circle cx="5.9" cy="6.6" r="1.3" fill="#111"/><circle cx="10.2" cy="6.6" r="1.3" fill="#111"/></svg><div style="position:absolute;left:2085px;top:323.6px;width:9px;height:9px;background:#1a1f1a;"></div><div style="position:absolute;left:2135.9px;top:324.6px;width:0;height:0;border-top:3.5px solid transparent;border-bottom:3.5px solid transparent;border-left:6px solid #d8d8d8"></div><svg style="position:absolute;left:2145.8999999999996px;top:322.05499999999995px" width="13" height="13"><path d="M1,2 L5,2 L6,3.5 L11,3.5 L11,10 L1,10 Z" fill="none" stroke="#e0e0e0" stroke-width="1"/><path d="M5,9 L9,5" stroke="#fff" stroke-width="1.6"/></svg><div style="position:absolute;left:2163.5px;top:323.3px;font-size:7.5px;line-height:9.5px;color:#dddddd;white-space:nowrap;">mouth</div><div style="position:absolute;left:2058px;top:336.4px;width:495px;height:16.8px;background:#1f1f1f;"></div><div style="position:absolute;left:2063px;top:338.84499999999997px;width:14px;height:12px;background:#363636;border-radius:1.5px"></div><svg style="position:absolute;left:2063px;top:338.84499999999997px" width="14" height="12"><ellipse cx="5" cy="6.2" rx="3" ry="3.4" fill="#f4f4f4" stroke="#111" stroke-width="0.8"/><ellipse cx="9.4" cy="6.2" rx="3" ry="3.4" fill="#f4f4f4" stroke="#111" stroke-width="0.8"/><circle cx="5.9" cy="6.6" r="1.3" fill="#111"/><circle cx="10.2" cy="6.6" r="1.3" fill="#111"/></svg><div style="position:absolute;left:2135.9px;top:341.3px;width:0;height:0;border-top:3.5px solid transparent;border-bottom:3.5px solid transparent;border-left:6px solid #d8d8d8"></div><svg style="position:absolute;left:2145.8999999999996px;top:338.84499999999997px" width="13" height="13"><path d="M1,2 L5,2 L6,3.5 L11,3.5 L11,10 L1,10 Z" fill="none" stroke="#e0e0e0" stroke-width="1"/><path d="M5,9 L9,5" stroke="#fff" stroke-width="1.6"/></svg><div style="position:absolute;left:2163.5px;top:340.1px;font-size:7.5px;line-height:9.5px;color:#dddddd;white-space:nowrap;">blush</div><div style="position:absolute;left:2058px;top:353.2px;width:495px;height:16.8px;background:#2d2d2d;"></div><div style="position:absolute;left:2063px;top:355.635px;width:14px;height:12px;background:#363636;border-radius:1.5px"></div><svg style="position:absolute;left:2063px;top:355.635px" width="14" height="12"><ellipse cx="5" cy="6.2" rx="3" ry="3.4" fill="#f4f4f4" stroke="#111" stroke-width="0.8"/><ellipse cx="9.4" cy="6.2" rx="3" ry="3.4" fill="#f4f4f4" stroke="#111" stroke-width="0.8"/><circle cx="5.9" cy="6.6" r="1.3" fill="#111"/><circle cx="10.2" cy="6.6" r="1.3" fill="#111"/></svg><div style="position:absolute;left:2085px;top:357.1px;width:9px;height:9px;background:#1c1c1c;"></div><svg style="position:absolute;left:2145.8999999999996px;top:355.635px" width="13" height="13"><rect x="3" y="2" width="7" height="7" rx="1" fill="none" stroke="#e0e0e0" stroke-width="1.1"/></svg><div style="position:absolute;left:2163.5px;top:356.9px;font-size:7.5px;line-height:9.5px;color:#dddddd;white-space:nowrap;">l_ear-Patch</div><div style="position:absolute;left:2058px;top:370.0px;width:495px;height:16.8px;background:#1f1f1f;"></div><div style="position:absolute;left:2063px;top:372.42499999999995px;width:14px;height:12px;background:#363636;border-radius:1.5px"></div><svg style="position:absolute;left:2063px;top:372.42499999999995px" width="14" height="12"><ellipse cx="5" cy="6.2" rx="3" ry="3.4" fill="#f4f4f4" stroke="#111" stroke-width="0.8"/><ellipse cx="9.4" cy="6.2" rx="3" ry="3.4" fill="#f4f4f4" stroke="#111" stroke-width="0.8"/><circle cx="5.9" cy="6.6" r="1.3" fill="#111"/><circle cx="10.2" cy="6.6" r="1.3" fill="#111"/></svg><svg style="position:absolute;left:2145.8999999999996px;top:372.42499999999995px" width="13" height="13"><rect x="3" y="2" width="7" height="7" rx="1" fill="none" stroke="#e0e0e0" stroke-width="1.1"/></svg><div style="position:absolute;left:2163.5px;top:373.7px;font-size:7.5px;line-height:9.5px;color:#dddddd;white-space:nowrap;">r_ear-Patch</div><div style="position:absolute;left:2058px;top:386.8px;width:495px;height:16.8px;background:#2d2d2d;"></div><div style="position:absolute;left:2063px;top:389.2149999999999px;width:14px;height:12px;background:#363636;border-radius:1.5px"></div><svg style="position:absolute;left:2063px;top:389.2149999999999px" width="14" height="12"><ellipse cx="5" cy="6.2" rx="3" ry="3.4" fill="#f4f4f4" stroke="#111" stroke-width="0.8"/><ellipse cx="9.4" cy="6.2" rx="3" ry="3.4" fill="#f4f4f4" stroke="#111" stroke-width="0.8"/><circle cx="5.9" cy="6.6" r="1.3" fill="#111"/><circle cx="10.2" cy="6.6" r="1.3" fill="#111"/></svg><div style="position:absolute;left:2085px;top:390.7px;width:9px;height:9px;background:#1c1c1c;"></div><svg style="position:absolute;left:2145.8999999999996px;top:389.2149999999999px" width="13" height="13"><path d="M2,6 Q1,1 6,2 Q9,0 11,3 Q12,8 7,9 Q3,10 2,6 Z" fill="none" stroke="#e0e0e0" stroke-width="1"/></svg><div style="position:absolute;left:2163.5px;top:390.5px;font-size:7.5px;line-height:9.5px;color:#dddddd;white-space:nowrap;">face</div><div style="position:absolute;left:2058px;top:403.6px;width:495px;height:16.8px;background:#1f1f1f;"></div><div style="position:absolute;left:2063px;top:406.005px;width:14px;height:12px;background:#363636;border-radius:1.5px"></div><svg style="position:absolute;left:2063px;top:406.005px" width="14" height="12"><ellipse cx="5" cy="6.2" rx="3" ry="3.4" fill="#f4f4f4" stroke="#111" stroke-width="0.8"/><ellipse cx="9.4" cy="6.2" rx="3" ry="3.4" fill="#f4f4f4" stroke="#111" stroke-width="0.8"/><circle cx="5.9" cy="6.6" r="1.3" fill="#111"/><circle cx="10.2" cy="6.6" r="1.3" fill="#111"/></svg><svg style="position:absolute;left:2145.8999999999996px;top:406.005px" width="13" height="13"><path d="M2,6 Q1,1 6,2 Q9,0 11,3 Q12,8 7,9 Q3,10 2,6 Z" fill="none" stroke="#e0e0e0" stroke-width="1"/></svg><div style="position:absolute;left:2163.5px;top:407.3px;font-size:7.5px;line-height:9.5px;color:#dddddd;white-space:nowrap;">l_ear</div><div style="position:absolute;left:2058px;top:420.4px;width:495px;height:16.8px;background:#2d2d2d;"></div><div style="position:absolute;left:2063px;top:422.79499999999996px;width:14px;height:12px;background:#363636;border-radius:1.5px"></div><svg style="position:absolute;left:2063px;top:422.79499999999996px" width="14" height="12"><ellipse cx="5" cy="6.2" rx="3" ry="3.4" fill="#f4f4f4" stroke="#111" stroke-width="0.8"/><ellipse cx="9.4" cy="6.2" rx="3" ry="3.4" fill="#f4f4f4" stroke="#111" stroke-width="0.8"/><circle cx="5.9" cy="6.6" r="1.3" fill="#111"/><circle cx="10.2" cy="6.6" r="1.3" fill="#111"/></svg><div style="position:absolute;left:2085px;top:424.3px;width:9px;height:9px;background:#1c1c1c;"></div><svg style="position:absolute;left:2145.8999999999996px;top:422.79499999999996px" width="13" height="13"><path d="M2,6 Q1,1 6,2 Q9,0 11,3 Q12,8 7,9 Q3,10 2,6 Z" fill="none" stroke="#e0e0e0" stroke-width="1"/></svg><div style="position:absolute;left:2163.5px;top:424.0px;font-size:7.5px;line-height:9.5px;color:#dddddd;white-space:nowrap;">r_ear</div><div style="position:absolute;left:2058px;top:437.2px;width:495px;height:16.8px;background:#1f1f1f;"></div><div style="position:absolute;left:2063px;top:439.5849999999999px;width:14px;height:12px;background:#363636;border-radius:1.5px"></div><svg style="position:absolute;left:2063px;top:439.5849999999999px" width="14" height="12"><ellipse cx="5" cy="6.2" rx="3" ry="3.4" fill="#f4f4f4" stroke="#111" stroke-width="0.8"/><ellipse cx="9.4" cy="6.2" rx="3" ry="3.4" fill="#f4f4f4" stroke="#111" stroke-width="0.8"/><circle cx="5.9" cy="6.6" r="1.3" fill="#111"/><circle cx="10.2" cy="6.6" r="1.3" fill="#111"/></svg><svg style="position:absolute;left:2145.8999999999996px;top:439.5849999999999px" width="13" height="13"><path d="M2,6 Q1,1 6,2 Q9,0 11,3 Q12,8 7,9 Q3,10 2,6 Z" fill="none" stroke="#e0e0e0" stroke-width="1"/></svg><div style="position:absolute;left:2163.5px;top:440.8px;font-size:7.5px;line-height:9.5px;color:#dddddd;white-space:nowrap;">hair</div><div style="position:absolute;left:2058px;top:454.0px;width:495px;height:16.8px;background:#2d2d2d;"></div><div style="position:absolute;left:2063px;top:456.375px;width:14px;height:12px;background:#363636;border-radius:1.5px"></div><svg style="position:absolute;left:2063px;top:456.375px" width="14" height="12"><ellipse cx="5" cy="6.2" rx="3" ry="3.4" fill="#f4f4f4" stroke="#111" stroke-width="0.8"/><ellipse cx="9.4" cy="6.2" rx="3" ry="3.4" fill="#f4f4f4" stroke="#111" stroke-width="0.8"/><circle cx="5.9" cy="6.6" r="1.3" fill="#111"/><circle cx="10.2" cy="6.6" r="1.3" fill="#111"/></svg><div style="position:absolute;left:2085px;top:457.9px;width:9px;height:9px;background:#1c1c1c;"></div><svg style="position:absolute;left:2125.7px;top:456.375px" width="13" height="13"><path d="M2,6 Q1,1 6,2 Q9,0 11,3 Q12,8 7,9 Q3,10 2,6 Z" fill="none" stroke="#e0e0e0" stroke-width="1"/></svg><div style="position:absolute;left:2143.6px;top:457.6px;font-size:7.5px;line-height:9.5px;color:#dddddd;white-space:nowrap;">neck</div><div style="position:absolute;left:2058px;top:470.8px;width:495px;height:16.8px;background:#1f1f1f;"></div><div style="position:absolute;left:2063px;top:473.16499999999996px;width:14px;height:12px;background:#363636;border-radius:1.5px"></div><svg style="position:absolute;left:2063px;top:473.16499999999996px" width="14" height="12"><ellipse cx="5" cy="6.2" rx="3" ry="3.4" fill="#f4f4f4" stroke="#111" stroke-width="0.8"/><ellipse cx="9.4" cy="6.2" rx="3" ry="3.4" fill="#f4f4f4" stroke="#111" stroke-width="0.8"/><circle cx="5.9" cy="6.6" r="1.3" fill="#111"/><circle cx="10.2" cy="6.6" r="1.3" fill="#111"/></svg><div style="position:absolute;left:2115.7px;top:475.7px;width:0;height:0;border-top:3.5px solid transparent;border-bottom:3.5px solid transparent;border-left:6px solid #d8d8d8"></div><svg style="position:absolute;left:2125.7px;top:473.16499999999996px" width="13" height="13"><path d="M1,2 L5,2 L6,3.5 L11,3.5 L11,10 L1,10 Z" fill="none" stroke="#e0e0e0" stroke-width="1"/><path d="M5,9 L9,5" stroke="#fff" stroke-width="1.6"/></svg><div style="position:absolute;left:2143.6px;top:474.4px;font-size:7.5px;line-height:9.5px;color:#dddddd;white-space:nowrap;">shirt_lines</div><div style="position:absolute;left:2058px;top:487.6px;width:495px;height:16.8px;background:#2d2d2d;"></div><div style="position:absolute;left:2063px;top:489.9549999999999px;width:14px;height:12px;background:#363636;border-radius:1.5px"></div><svg style="position:absolute;left:2063px;top:489.9549999999999px" width="14" height="12"><ellipse cx="5" cy="6.2" rx="3" ry="3.4" fill="#f4f4f4" stroke="#111" stroke-width="0.8"/><ellipse cx="9.4" cy="6.2" rx="3" ry="3.4" fill="#f4f4f4" stroke="#111" stroke-width="0.8"/><circle cx="5.9" cy="6.6" r="1.3" fill="#111"/><circle cx="10.2" cy="6.6" r="1.3" fill="#111"/></svg><div style="position:absolute;left:2085px;top:491.5px;width:9px;height:9px;background:#1c1c1c;"></div><div style="position:absolute;left:2115.7px;top:492.5px;width:0;height:0;border-top:3.5px solid transparent;border-bottom:3.5px solid transparent;border-left:6px solid #d8d8d8"></div><svg style="position:absolute;left:2125.7px;top:489.9549999999999px" width="13" height="13"><path d="M1,2 L5,2 L6,3.5 L11,3.5 L11,10 L1,10 Z" fill="none" stroke="#e0e0e0" stroke-width="1"/><path d="M5,9 L9,5" stroke="#fff" stroke-width="1.6"/><rect x="1" y="8" width="5" height="4" fill="#a9c7bf"/></svg><div style="position:absolute;left:2143.6px;top:491.2px;font-size:7.5px;line-height:9.5px;color:#dddddd;white-space:nowrap;">body</div><div style="position:absolute;left:2058px;top:504.4px;width:495px;height:16.8px;background:#1f1f1f;"></div><div style="position:absolute;left:2063px;top:506.745px;width:14px;height:12px;background:#363636;border-radius:1.5px"></div><svg style="position:absolute;left:2063px;top:506.745px" width="14" height="12"><ellipse cx="5" cy="6.2" rx="3" ry="3.4" fill="#f4f4f4" stroke="#111" stroke-width="0.8"/><ellipse cx="9.4" cy="6.2" rx="3" ry="3.4" fill="#f4f4f4" stroke="#111" stroke-width="0.8"/><circle cx="5.9" cy="6.6" r="1.3" fill="#111"/><circle cx="10.2" cy="6.6" r="1.3" fill="#111"/></svg><svg style="position:absolute;left:2125.7px;top:506.745px" width="13" height="13"><path d="M2,6 Q1,1 6,2 Q9,0 11,3 Q12,8 7,9 Q3,10 2,6 Z" fill="none" stroke="#e0e0e0" stroke-width="1"/></svg><div style="position:absolute;left:2143.6px;top:508.0px;font-size:7.5px;line-height:9.5px;color:#dddddd;white-space:nowrap;">body</div><div style="position:absolute;left:2058px;top:521.1px;width:495px;height:16.8px;background:#2d2d2d;"></div><div style="position:absolute;left:2063px;top:523.535px;width:14px;height:12px;background:#363636;border-radius:1.5px"></div><svg style="position:absolute;left:2063px;top:523.535px" width="14" height="12"><ellipse cx="5" cy="6.2" rx="3" ry="3.4" fill="#f4f4f4" stroke="#111" stroke-width="0.8"/><ellipse cx="9.4" cy="6.2" rx="3" ry="3.4" fill="#f4f4f4" stroke="#111" stroke-width="0.8"/><circle cx="5.9" cy="6.6" r="1.3" fill="#111"/><circle cx="10.2" cy="6.6" r="1.3" fill="#111"/></svg><div style="position:absolute;left:2085px;top:525.0px;width:9px;height:9px;background:#1c1c1c;"></div><svg style="position:absolute;left:2125.7px;top:523.535px" width="13" height="13"><path d="M2,6 Q1,1 6,2 Q9,0 11,3 Q12,8 7,9 Q3,10 2,6 Z" fill="none" stroke="#e0e0e0" stroke-width="1"/></svg><div style="position:absolute;left:2143.6px;top:524.8px;font-size:7.5px;line-height:9.5px;color:#dddddd;white-space:nowrap;">shirt</div><div style="position:absolute;left:2058px;top:537.9px;width:495px;height:16.8px;background:#1f1f1f;"></div><div style="position:absolute;left:2063px;top:540.3249999999999px;width:14px;height:12px;background:#363636;border-radius:1.5px"></div><svg style="position:absolute;left:2063px;top:540.3249999999999px" width="14" height="12"><ellipse cx="5" cy="6.2" rx="3" ry="3.4" fill="#f4f4f4" stroke="#111" stroke-width="0.8"/><ellipse cx="9.4" cy="6.2" rx="3" ry="3.4" fill="#f4f4f4" stroke="#111" stroke-width="0.8"/><circle cx="5.9" cy="6.6" r="1.3" fill="#111"/><circle cx="10.2" cy="6.6" r="1.3" fill="#111"/></svg><div style="position:absolute;left:2115.7px;top:542.8px;width:0;height:0;border-top:3.5px solid transparent;border-bottom:3.5px solid transparent;border-left:6px solid #d8d8d8"></div><svg style="position:absolute;left:2125.7px;top:540.3249999999999px" width="13" height="13"><path d="M1,2 L5,2 L6,3.5 L11,3.5 L11,10 L1,10 Z" fill="none" stroke="#e0e0e0" stroke-width="1"/><path d="M5,9 L9,5" stroke="#fff" stroke-width="1.6"/></svg><div style="position:absolute;left:2143.6px;top:541.6px;font-size:7.5px;line-height:9.5px;color:#dddddd;white-space:nowrap;">belt</div><div style="position:absolute;left:2058px;top:554.7px;width:495px;height:16.8px;background:#2d2d2d;"></div><div style="position:absolute;left:2063px;top:557.115px;width:14px;height:12px;background:#363636;border-radius:1.5px"></div><svg style="position:absolute;left:2063px;top:557.115px" width="14" height="12"><ellipse cx="5" cy="6.2" rx="3" ry="3.4" fill="#f4f4f4" stroke="#111" stroke-width="0.8"/><ellipse cx="9.4" cy="6.2" rx="3" ry="3.4" fill="#f4f4f4" stroke="#111" stroke-width="0.8"/><circle cx="5.9" cy="6.6" r="1.3" fill="#111"/><circle cx="10.2" cy="6.6" r="1.3" fill="#111"/></svg><div style="position:absolute;left:2085px;top:558.6px;width:9px;height:9px;background:#1c1c1c;"></div><svg style="position:absolute;left:2125.7px;top:557.115px" width="13" height="13"><path d="M2,6 Q1,1 6,2 Q9,0 11,3 Q12,8 7,9 Q3,10 2,6 Z" fill="none" stroke="#e0e0e0" stroke-width="1"/></svg><div style="position:absolute;left:2143.6px;top:558.4px;font-size:7.5px;line-height:9.5px;color:#dddddd;white-space:nowrap;">l_groin_line</div><div style="position:absolute;left:2058px;top:571.5px;width:495px;height:16.8px;background:#1f1f1f;"></div><div style="position:absolute;left:2063px;top:573.905px;width:14px;height:12px;background:#363636;border-radius:1.5px"></div><svg style="position:absolute;left:2063px;top:573.905px" width="14" height="12"><ellipse cx="5" cy="6.2" rx="3" ry="3.4" fill="#f4f4f4" stroke="#111" stroke-width="0.8"/><ellipse cx="9.4" cy="6.2" rx="3" ry="3.4" fill="#f4f4f4" stroke="#111" stroke-width="0.8"/><circle cx="5.9" cy="6.6" r="1.3" fill="#111"/><circle cx="10.2" cy="6.6" r="1.3" fill="#111"/></svg><svg style="position:absolute;left:2125.7px;top:573.905px" width="13" height="13"><path d="M2,6 Q1,1 6,2 Q9,0 11,3 Q12,8 7,9 Q3,10 2,6 Z" fill="none" stroke="#e0e0e0" stroke-width="1"/></svg><div style="position:absolute;left:2143.6px;top:575.2px;font-size:7.5px;line-height:9.5px;color:#dddddd;white-space:nowrap;">r_groin_line</div><div style="position:absolute;left:2058px;top:588.3px;width:495px;height:16.8px;background:#2d2d2d;"></div><div style="position:absolute;left:2063px;top:590.6949999999999px;width:14px;height:12px;background:#363636;border-radius:1.5px"></div><svg style="position:absolute;left:2063px;top:590.6949999999999px" width="14" height="12"><ellipse cx="5" cy="6.2" rx="3" ry="3.4" fill="#f4f4f4" stroke="#111" stroke-width="0.8"/><ellipse cx="9.4" cy="6.2" rx="3" ry="3.4" fill="#f4f4f4" stroke="#111" stroke-width="0.8"/><circle cx="5.9" cy="6.6" r="1.3" fill="#111"/><circle cx="10.2" cy="6.6" r="1.3" fill="#111"/></svg><div style="position:absolute;left:2085px;top:592.2px;width:9px;height:9px;background:#1c1c1c;"></div><div style="position:absolute;left:2115.7px;top:593.2px;width:0;height:0;border-top:3.5px solid transparent;border-bottom:3.5px solid transparent;border-left:6px solid #d8d8d8"></div><svg style="position:absolute;left:2125.7px;top:590.6949999999999px" width="13" height="13"><path d="M1,2 L5,2 L6,3.5 L11,3.5 L11,10 L1,10 Z" fill="none" stroke="#e0e0e0" stroke-width="1"/><rect x="1" y="8" width="5" height="4" fill="#a9c7bf"/></svg><div style="position:absolute;left:2143.6px;top:591.9px;font-size:7.5px;line-height:9.5px;color:#dddddd;white-space:nowrap;">legs</div><div style="position:absolute;left:2058px;top:605.1px;width:495px;height:16.8px;background:#1f1f1f;"></div><div style="position:absolute;left:2063px;top:607.485px;width:14px;height:12px;background:#363636;border-radius:1.5px"></div><svg style="position:absolute;left:2063px;top:607.485px" width="14" height="12"><ellipse cx="5" cy="6.2" rx="3" ry="3.4" fill="#f4f4f4" stroke="#111" stroke-width="0.8"/><ellipse cx="9.4" cy="6.2" rx="3" ry="3.4" fill="#f4f4f4" stroke="#111" stroke-width="0.8"/><circle cx="5.9" cy="6.6" r="1.3" fill="#111"/><circle cx="10.2" cy="6.6" r="1.3" fill="#111"/></svg><div style="position:absolute;left:2115.7px;top:610.0px;width:0;height:0;border-top:3.5px solid transparent;border-bottom:3.5px solid transparent;border-left:6px solid #d8d8d8"></div><svg style="position:absolute;left:2125.7px;top:607.485px" width="13" height="13"><path d="M1,2 L5,2 L6,3.5 L11,3.5 L11,10 L1,10 Z" fill="none" stroke="#e0e0e0" stroke-width="1"/><path d="M5,9 L9,5" stroke="#fff" stroke-width="1.6"/></svg><div style="position:absolute;left:2143.6px;top:608.7px;font-size:7.5px;line-height:9.5px;color:#dddddd;white-space:nowrap;">groin</div><div style="position:absolute;left:2058px;top:621.9px;width:495px;height:16.8px;background:#2d2d2d;"></div><div style="position:absolute;left:2063px;top:624.275px;width:14px;height:12px;background:#363636;border-radius:1.5px"></div><svg style="position:absolute;left:2063px;top:624.275px" width="14" height="12"><ellipse cx="5" cy="6.2" rx="3" ry="3.4" fill="#f4f4f4" stroke="#111" stroke-width="0.8"/><ellipse cx="9.4" cy="6.2" rx="3" ry="3.4" fill="#f4f4f4" stroke="#111" stroke-width="0.8"/><circle cx="5.9" cy="6.6" r="1.3" fill="#111"/><circle cx="10.2" cy="6.6" r="1.3" fill="#111"/></svg><div style="position:absolute;left:2085px;top:625.8px;width:9px;height:9px;background:#1c1c1c;"></div><div style="position:absolute;left:2115.7px;top:626.8px;width:0;height:0;border-top:3.5px solid transparent;border-bottom:3.5px solid transparent;border-left:6px solid #d8d8d8"></div><svg style="position:absolute;left:2125.7px;top:624.275px" width="13" height="13"><path d="M1,2 L5,2 L6,3.5 L11,3.5 L11,10 L1,10 Z" fill="none" stroke="#e0e0e0" stroke-width="1"/><rect x="1" y="8" width="5" height="4" fill="#a9c7bf"/></svg><div style="position:absolute;left:2143.6px;top:625.5px;font-size:7.5px;line-height:9.5px;color:#dddddd;white-space:nowrap;">forearms_ul</div><div style="position:absolute;left:2058px;top:638.7px;width:495px;height:16.0px;background:#3e5639;"></div><div style="position:absolute;left:2063px;top:641.0649999999999px;width:14px;height:12px;background:#559a45;border-radius:1.5px"></div><svg style="position:absolute;left:2063px;top:641.0649999999999px" width="14" height="12"><ellipse cx="5" cy="6.2" rx="3" ry="3.4" fill="#f4f4f4" stroke="#111" stroke-width="0.8"/><ellipse cx="9.4" cy="6.2" rx="3" ry="3.4" fill="#f4f4f4" stroke="#111" stroke-width="0.8"/><circle cx="5.9" cy="6.6" r="1.3" fill="#111"/><circle cx="10.2" cy="6.6" r="1.3" fill="#111"/></svg><div style="position:absolute;left:2085px;top:642.6px;width:9px;height:9px;background:#1a1f1a;"></div><div style="position:absolute;left:2105.0px;top:643.6px;width:0;height:0;border-top:3.5px solid transparent;border-bottom:3.5px solid transparent;border-left:6px solid #d8d8d8"></div><svg style="position:absolute;left:2116px;top:641.0649999999999px" width="13" height="13"><path d="M1,3 Q3,1 4,4 L8,4 Q9,1 11,3 Q12,5.5 11,8 Q9,10 8,7 L4,7 Q3,10 1,8 Q0,5.5 1,3 Z" fill="none" stroke="#e0e0e0" stroke-width="1"/></svg><div style="position:absolute;left:2133.5px;top:642.3px;font-size:7.5px;line-height:9.5px;color:#dddddd;white-space:nowrap;">malik_back_v008</div><div style="position:absolute;left:2058px;top:655.5px;width:495px;height:16.0px;background:#3e5639;"></div><div style="position:absolute;left:2063px;top:657.855px;width:14px;height:12px;background:#559a45;border-radius:1.5px"></div><svg style="position:absolute;left:2063px;top:657.855px" width="14" height="12"><ellipse cx="5" cy="6.2" rx="3" ry="3.4" fill="#f4f4f4" stroke="#111" stroke-width="0.8"/><ellipse cx="9.4" cy="6.2" rx="3" ry="3.4" fill="#f4f4f4" stroke="#111" stroke-width="0.8"/><circle cx="5.9" cy="6.6" r="1.3" fill="#111"/><circle cx="10.2" cy="6.6" r="1.3" fill="#111"/></svg><div style="position:absolute;left:2085px;top:659.4px;width:9px;height:9px;background:#1a1f1a;"></div><div style="position:absolute;left:2105.0px;top:660.4px;width:0;height:0;border-top:3.5px solid transparent;border-bottom:3.5px solid transparent;border-left:6px solid #d8d8d8"></div><svg style="position:absolute;left:2116px;top:657.855px" width="13" height="13"><path d="M1,3 Q3,1 4,4 L8,4 Q9,1 11,3 Q12,5.5 11,8 Q9,10 8,7 L4,7 Q3,10 1,8 Q0,5.5 1,3 Z" fill="none" stroke="#e0e0e0" stroke-width="1"/></svg><div style="position:absolute;left:2133.5px;top:659.1px;font-size:7.5px;line-height:9.5px;color:#dddddd;white-space:nowrap;">malik_side_v009</div><div style="position:absolute;left:0px;top:1126px;width:2053px;height:1px;background:#1a1a1a;"></div><div style="position:absolute;left:0px;top:1144px;width:2053px;height:2px;background:#1c1c1c;"></div><div style="position:absolute;left:905px;top:1128px;width:50px;height:14px;background:#262626;"></div><div style="position:absolute;left:960px;top:1128px;width:70px;height:14px;background:#262626;"></div><svg style="position:absolute;left:905px;top:1128px" width="130" height="14" viewBox="0 0 130 14"><path d="M4,7 L10,3 L10,11 Z M11,7 L17,3 L17,11 Z" fill="none" stroke="#707070" stroke-width="1"/><path d="M24,3 L24,11 M33,3 L27,7 L33,11 Z" fill="none" stroke="#707070" stroke-width="1"/><path d="M46,3 L40,7 L46,11 Z M52,3 L46,7 L52,11 Z" fill="none" stroke="#707070" stroke-width="1"/><path d="M62,3 L69,7 L62,11 Z" fill="none" stroke="#bdbdbd" stroke-width="1.2"/><path d="M79,3 L85,7 L79,11 Z M85,3 L91,7 L85,11 Z" fill="none" stroke="#bdbdbd" stroke-width="1.2"/><path d="M98,3 L104,7 L98,11 Z M106,3 L106,11" fill="none" stroke="#bdbdbd" stroke-width="1.2"/><path d="M116,3 L122,7 L116,11 Z" fill="none" stroke="#bdbdbd" stroke-width="1.2"/><circle cx="126" cy="7" r="3.5" fill="none" stroke="#bdbdbd" stroke-width="1.2"/></svg><div style="position:absolute;left:1044px;top:1131px;font-size:7.5px;line-height:9.5px;color:#cfcfcf;white-space:nowrap;">Frame</div><div style="position:absolute;left:1071px;top:1129px;width:57px;height:12px;background:#1e1e1e;"></div><div style="position:absolute;left:1074px;top:1131px;font-size:7.5px;line-height:9.5px;color:#5aa8a0;white-space:nowrap;">0</div><div style="position:absolute;left:1132px;top:1131px;font-size:7.5px;line-height:9.5px;color:#cfcfcf;white-space:nowrap;">of</div><div style="position:absolute;left:1143px;top:1129px;width:57px;height:12px;background:#1e1e1e;"></div><div style="position:absolute;left:1146px;top:1131px;font-size:7.5px;line-height:9.5px;color:#5aa8a0;white-space:nowrap;">449</div><div style="position:absolute;left:1209px;top:1128px;width:18px;height:14px;background:#262626;"></div><svg style="position:absolute;left:1209px;top:1128px" width="18" height="14" viewBox="0 0 18 14"><path d="M4,5 L7,5 L10,2 L10,12 L7,9 L4,9 Z" fill="none" stroke="#bdbdbd" stroke-width="1"/><path d="M12,4 Q14,7 12,10 M14,3 Q17,7 14,11" fill="none" stroke="#bdbdbd" stroke-width="1"/></svg><svg style="position:absolute;left:1842px;top:1128px" width="160" height="14" viewBox="0 0 160 14"><rect x="2" y="3" width="11" height="8" fill="none" stroke="#bdbdbd" stroke-width="1"/><path d="M5,7 L10,7" stroke="#bdbdbd"/><rect x="17" y="2" width="11" height="10" fill="#1e1e1e" stroke="#777" stroke-width="1"/><rect x="30" y="2" width="11" height="10" fill="#8a8a8a"/><rect x="35" y="2" width="1" height="10" fill="#333"/><rect x="43" y="2" width="11" height="10" fill="#8a8a8a"/><rect x="43" y="7" width="11" height="1" fill="#333"/><rect x="56" y="2" width="11" height="10" fill="#8a8a8a"/><rect x="61" y="2" width="1" height="10" fill="#333"/><rect x="56" y="7" width="11" height="1" fill="#333"/><rect x="73" y="1" width="14" height="13" fill="#2a3a38"/><path d="M76,12 Q80,0 84,12" fill="none" stroke="#bdbdbd" stroke-width="1.2"/><rect x="90" y="1" width="14" height="13" fill="#2a3a38"/><circle cx="97" cy="7.5" r="5" fill="none" stroke="#bdbdbd" stroke-width="1.1"/><rect x="107" y="1" width="14" height="13" fill="#2a3a38"/><rect x="110" y="3" width="8" height="9" fill="none" stroke="#bdbdbd" stroke-width="1.1"/><rect x="124" y="1" width="14" height="13" fill="#2a3a38"/><path d="M126,6 Q131,3 136,8 M126,8 Q131,12 136,6" fill="none" stroke="#bdbdbd" stroke-width="1.1"/><path d="M143,12 L153,2" stroke="#bdbdbd" stroke-width="1.5"/></svg><div style="position:absolute;left:2002px;top:1128px;width:48px;height:14px;background:#222;"></div><div style="position:absolute;left:2009px;top:1131px;font-size:7.5px;line-height:9.5px;color:#cfcfcf;white-space:nowrap;">Display</div><div style="position:absolute;left:2043px;top:1131px;font-size:5.5px;line-height:7.5px;color:#8a8a8a;white-space:nowrap;">&#9660;</div><div style="position:absolute;left:35px;top:1149px;width:23px;height:14px;background:#1e1e1e;"></div><div style="position:absolute;left:60px;top:1149px;width:27px;height:14px;background:#3c3c3c;"></div><div style="position:absolute;left:88px;top:1149px;width:25px;height:14px;background:#1e1e1e;"></div><div style="position:absolute;left:114px;top:1149px;width:27px;height:14px;background:#1e1e1e;"></div><div style="position:absolute;left:149px;top:1149px;width:18px;height:14px;background:#1e1e1e;"></div><div style="position:absolute;left:169px;top:1149px;width:64px;height:14px;background:#1e1e1e;"></div><div style="position:absolute;left:242px;top:1149px;width:20px;height:14px;background:#262626;"></div><div style="position:absolute;left:263px;top:1149px;width:19px;height:14px;background:#262626;"></div><div style="position:absolute;left:286px;top:1149px;width:18px;height:14px;background:#262626;"></div><div style="position:absolute;left:306px;top:1149px;width:18px;height:14px;background:#262626;"></div><div style="position:absolute;left:331px;top:1149px;width:74px;height:14px;background:#1e1e1e;"></div><div style="position:absolute;left:408px;top:1149px;width:29px;height:14px;background:#1e1e1e;"></div><div style="position:absolute;left:440px;top:1149px;width:18px;height:14px;background:#262626;"></div><div style="position:absolute;left:465px;top:1149px;width:63px;height:14px;background:#1e1e1e;"></div><div style="position:absolute;left:536px;top:1149px;width:19px;height:14px;background:#262626;"></div><div style="position:absolute;left:561px;top:1149px;width:19px;height:14px;background:#262626;"></div><div style="position:absolute;left:582px;top:1149px;width:18px;height:14px;background:#262626;"></div><div style="position:absolute;left:601px;top:1149px;width:17px;height:14px;background:#262626;"></div><svg style="position:absolute;left:35px;top:1149px" width="590" height="14" viewBox="0 0 590 14"><text x="2" y="11.5" font-size="11" fill="#bdbdbd">0</text><path d="M10,4 L19,4 M16,1.5 L19,4 L16,6.5 M19,10 L10,10 M13,7.5 L10,10 L13,12.5" fill="none" stroke="#bdbdbd" stroke-width="1.3"/><circle cx="31" cy="7" r="3.5" fill="#bdbdbd"/><circle cx="46" cy="7" r="3.5" fill="#bdbdbd"/><path d="M31,7 L46,7" stroke="#bdbdbd" stroke-width="1.3"/><rect x="57" y="2" width="10" height="5" fill="#bdbdbd"/><rect x="63" y="7" width="11" height="5" fill="none" stroke="#bdbdbd" stroke-width="1.2"/><circle cx="84" cy="4" r="3" fill="#bdbdbd"/><circle cx="102" cy="10" r="3" fill="#bdbdbd"/><path d="M84,4 Q92,3 94,7 Q96,10 102,10" fill="none" stroke="#bdbdbd" stroke-width="1.2"/><circle cx="123" cy="8" r="4" fill="none" stroke="#888" stroke-width="1"/><circle cx="126" cy="6" r="4" fill="#12302a" stroke="#bdbdbd" stroke-width="1"/><text x="141" y="10.5" font-size="7.5" fill="#8e8e8e">Onion Skins</text><text x="191" y="10" font-size="6" fill="#8a8a8a">&#9660;</text><g fill="#bdbdbd"><circle cx="212" cy="3" r="1.6"/><circle cx="217" cy="3" r="1.6"/><circle cx="222" cy="3" r="1.6"/><circle cx="212" cy="11" r="1.6"/><circle cx="217" cy="11" r="1.6"/><circle cx="222" cy="11" r="1.6"/><circle cx="212" cy="7" r="1"/><circle cx="222" cy="7" r="1"/></g><circle cx="232" cy="10" r="2.5" fill="none" stroke="#bdbdbd" stroke-width="1.2"/><text x="235" y="7" font-size="7" fill="#bdbdbd">A</text><circle cx="256" cy="8" r="3" fill="none" stroke="#bdbdbd" stroke-width="1.3"/><path d="M259,8 L268,8 M264,8 L264,5 M267,8 L267,5" stroke="#bdbdbd" stroke-width="1.2"/><circle cx="280" cy="7" r="5" fill="none" stroke="#bdbdbd" stroke-width="1.1"/><text x="277.5" y="9.5" font-size="6.5" fill="#bdbdbd">R</text><text x="326" y="10.5" font-size="7.5" fill="#d0d0d0">Smooth</text><text x="362" y="10" font-size="6" fill="#8a8a8a">&#9660;</text><text x="382" y="10.5" font-size="7.5" fill="#d0d0d0">1</text><text x="394" y="10" font-size="6" fill="#8a8a8a">&#9660;</text><rect x="406" y="2" width="14" height="10" fill="none" stroke="#bdbdbd" stroke-width="1.1"/><text x="410" y="10.5" font-size="7" fill="#bdbdbd">K</text><circle cx="436" cy="7" r="3" fill="#bdbdbd"/><path d="M440,7 L447,7 M442,4.5 L440,7 L442,9.5" fill="none" stroke="#bdbdbd" stroke-width="1.1"/><path d="M451,7 L458,7 M455.5,4.5 L458,7 L455.5,9.5" fill="none" stroke="#bdbdbd" stroke-width="1.1"/><circle cx="462" cy="7" r="3" fill="#bdbdbd"/><text x="470" y="10.5" font-size="7.5" fill="#5aa8a0">2</text><path d="M505,2 L513,2 L513,9 L509,12 L505,9 Z" fill="none" stroke="#bdbdbd" stroke-width="1.1"/><path d="M530,3 L536,7 L530,11 M528,7 L536,7" fill="none" stroke="#bdbdbd" stroke-width="1.2"/><circle cx="540" cy="7" r="2.5" fill="#bdbdbd"/><rect x="550" y="3" width="11" height="9" fill="none" stroke="#bdbdbd" stroke-width="1.1"/><circle cx="555.5" cy="7.5" r="2.5" fill="none" stroke="#bdbdbd"/><path d="M570,2 L578,2 L578,9 L574,12 L570,9 Z M568,1 L580,13" fill="none" stroke="#bdbdbd" stroke-width="1.1"/></svg><div style="position:absolute;left:1978px;top:1149px;width:30px;height:14px;background:#1e1e1e;"></div><div style="position:absolute;left:1982px;top:1151px;font-size:7.5px;line-height:9.5px;color:#cfcfcf;white-space:nowrap;">N...</div><div style="position:absolute;left:2000px;top:1151px;font-size:5.5px;line-height:7.5px;color:#8a8a8a;white-space:nowrap;">&#9660;</div><div style="position:absolute;left:2012px;top:1149px;width:18px;height:14px;background:#262626;"></div><div style="position:absolute;left:2032px;top:1149px;width:18px;height:14px;background:#262626;"></div><svg style="position:absolute;left:2012px;top:1149px" width="40" height="14" viewBox="0 0 40 14"><circle cx="10" cy="6" r="4.5" fill="none" stroke="#bdbdbd" stroke-width="1.3"/><path d="M7,6 L13,6 M6.5,9.5 L3,13" stroke="#bdbdbd" stroke-width="1.3"/><circle cx="30" cy="6" r="4.5" fill="none" stroke="#bdbdbd" stroke-width="1.3"/><path d="M27,6 L33,6 M30,3 L30,9 M26.5,9.5 L23,13" stroke="#bdbdbd" stroke-width="1.3"/></svg><div style="position:absolute;left:32px;top:1166px;width:2009px;height:10.5px;background:#4a716d;"></div><svg style="position:absolute;left:0px;top:1166px" width="2041" height="11" viewBox="0 0 2041 11"><text x="38.0" y="8.2" font-size="8" fill="#d6e6e2" text-anchor="middle">0</text><text x="68.6" y="8.2" font-size="8" fill="#d6e6e2" text-anchor="middle">5</text><text x="99.2" y="8.2" font-size="8" fill="#d6e6e2" text-anchor="middle">10</text><text x="129.7" y="8.2" font-size="8" fill="#d6e6e2" text-anchor="middle">15</text><text x="160.3" y="8.2" font-size="8" fill="#d6e6e2" text-anchor="middle">20</text><text x="190.9" y="8.2" font-size="8" fill="#d6e6e2" text-anchor="middle">25</text><text x="221.5" y="8.2" font-size="8" fill="#d6e6e2" text-anchor="middle">30</text><text x="252.1" y="8.2" font-size="8" fill="#d6e6e2" text-anchor="middle">35</text><text x="282.7" y="8.2" font-size="8" fill="#d6e6e2" text-anchor="middle">40</text><text x="313.2" y="8.2" font-size="8" fill="#d6e6e2" text-anchor="middle">45</text><text x="343.8" y="8.2" font-size="8" fill="#d6e6e2" text-anchor="middle">50</text><text x="374.4" y="8.2" font-size="8" fill="#d6e6e2" text-anchor="middle">55</text><text x="405.0" y="8.2" font-size="8" fill="#d6e6e2" text-anchor="middle">60</text><text x="435.6" y="8.2" font-size="8" fill="#d6e6e2" text-anchor="middle">65</text><text x="466.1" y="8.2" font-size="8" fill="#d6e6e2" text-anchor="middle">70</text><text x="496.7" y="8.2" font-size="8" fill="#d6e6e2" text-anchor="middle">75</text><text x="527.3" y="8.2" font-size="8" fill="#d6e6e2" text-anchor="middle">80</text><text x="557.9" y="8.2" font-size="8" fill="#d6e6e2" text-anchor="middle">85</text><text x="588.5" y="8.2" font-size="8" fill="#d6e6e2" text-anchor="middle">90</text><text x="619.0" y="8.2" font-size="8" fill="#d6e6e2" text-anchor="middle">95</text><text x="649.6" y="8.2" font-size="8" fill="#d6e6e2" text-anchor="middle">100</text><text x="680.2" y="8.2" font-size="8" fill="#d6e6e2" text-anchor="middle">105</text><text x="710.8" y="8.2" font-size="8" fill="#d6e6e2" text-anchor="middle">110</text><text x="741.4" y="8.2" font-size="8" fill="#d6e6e2" text-anchor="middle">115</text><text x="772.0" y="8.2" font-size="8" fill="#d6e6e2" text-anchor="middle">120</text><text x="802.5" y="8.2" font-size="8" fill="#d6e6e2" text-anchor="middle">125</text><text x="833.1" y="8.2" font-size="8" fill="#d6e6e2" text-anchor="middle">130</text><text x="863.7" y="8.2" font-size="8" fill="#d6e6e2" text-anchor="middle">135</text><text x="894.3" y="8.2" font-size="8" fill="#d6e6e2" text-anchor="middle">140</text><text x="924.9" y="8.2" font-size="8" fill="#d6e6e2" text-anchor="middle">145</text><text x="955.4" y="8.2" font-size="8" fill="#d6e6e2" text-anchor="middle">150</text><text x="986.0" y="8.2" font-size="8" fill="#d6e6e2" text-anchor="middle">155</text><text x="1016.6" y="8.2" font-size="8" fill="#d6e6e2" text-anchor="middle">160</text><text x="1047.2" y="8.2" font-size="8" fill="#d6e6e2" text-anchor="middle">165</text><text x="1077.8" y="8.2" font-size="8" fill="#d6e6e2" text-anchor="middle">170</text><text x="1108.4" y="8.2" font-size="8" fill="#d6e6e2" text-anchor="middle">175</text><text x="1138.9" y="8.2" font-size="8" fill="#d6e6e2" text-anchor="middle">180</text><text x="1169.5" y="8.2" font-size="8" fill="#d6e6e2" text-anchor="middle">185</text><text x="1200.1" y="8.2" font-size="8" fill="#d6e6e2" text-anchor="middle">190</text><text x="1230.7" y="8.2" font-size="8" fill="#d6e6e2" text-anchor="middle">195</text><text x="1261.3" y="8.2" font-size="8" fill="#d6e6e2" text-anchor="middle">200</text><text x="1291.8" y="8.2" font-size="8" fill="#d6e6e2" text-anchor="middle">205</text><text x="1322.4" y="8.2" font-size="8" fill="#d6e6e2" text-anchor="middle">210</text><text x="1353.0" y="8.2" font-size="8" fill="#d6e6e2" text-anchor="middle">215</text><text x="1383.6" y="8.2" font-size="8" fill="#d6e6e2" text-anchor="middle">220</text><text x="1414.2" y="8.2" font-size="8" fill="#d6e6e2" text-anchor="middle">225</text><text x="1444.7" y="8.2" font-size="8" fill="#d6e6e2" text-anchor="middle">230</text><text x="1475.3" y="8.2" font-size="8" fill="#d6e6e2" text-anchor="middle">235</text><text x="1505.9" y="8.2" font-size="8" fill="#d6e6e2" text-anchor="middle">240</text><text x="1536.5" y="8.2" font-size="8" fill="#d6e6e2" text-anchor="middle">245</text><text x="1567.1" y="8.2" font-size="8" fill="#d6e6e2" text-anchor="middle">250</text><text x="1597.7" y="8.2" font-size="8" fill="#d6e6e2" text-anchor="middle">255</text><text x="1628.2" y="8.2" font-size="8" fill="#d6e6e2" text-anchor="middle">260</text><text x="1658.8" y="8.2" font-size="8" fill="#d6e6e2" text-anchor="middle">265</text><text x="1689.4" y="8.2" font-size="8" fill="#d6e6e2" text-anchor="middle">270</text><text x="1720.0" y="8.2" font-size="8" fill="#d6e6e2" text-anchor="middle">275</text><text x="1750.6" y="8.2" font-size="8" fill="#d6e6e2" text-anchor="middle">280</text><text x="1781.1" y="8.2" font-size="8" fill="#d6e6e2" text-anchor="middle">285</text><text x="1811.7" y="8.2" font-size="8" fill="#d6e6e2" text-anchor="middle">290</text><text x="1842.3" y="8.2" font-size="8" fill="#d6e6e2" text-anchor="middle">295</text><text x="1872.9" y="8.2" font-size="8" fill="#d6e6e2" text-anchor="middle">300</text><text x="1903.5" y="8.2" font-size="8" fill="#d6e6e2" text-anchor="middle">305</text><text x="1934.1" y="8.2" font-size="8" fill="#d6e6e2" text-anchor="middle">310</text><text x="1964.6" y="8.2" font-size="8" fill="#d6e6e2" text-anchor="middle">315</text><text x="1995.2" y="8.2" font-size="8" fill="#d6e6e2" text-anchor="middle">320</text><text x="2025.8" y="8.2" font-size="8" fill="#d6e6e2" text-anchor="middle">325</text></svg><svg style="position:absolute;left:43px;top:1166px" width="14" height="11" viewBox="0 0 14 11"><path d="M0.5,0 L12,5.5 L0.5,11 Z" fill="#1e9a28"/></svg><div style="position:absolute;left:32px;top:1176.5px;width:2009px;height:12.5px;background:#1c1c1c;"></div><div style="position:absolute;left:32px;top:1189px;width:2009px;height:121px;background:#323232;"></div><div style="position:absolute;left:32px;top:1189px;width:2009px;height:1px;background:#3a3a3a;"></div><svg style="position:absolute;left:0px;top:0px" width="2041" height="1335" viewBox="0 0 2041 1335"><text x="38.5" y="1198" font-size="8" fill="#cfcfcf" text-anchor="middle">0</text><line x1="38.5" y1="1200" x2="38.5" y2="1310" stroke="#9c9c9c" stroke-width="1"/><text x="191.5" y="1198" font-size="8" fill="#cfcfcf" text-anchor="middle">1</text><line x1="191.5" y1="1200" x2="191.5" y2="1310" stroke="#9c9c9c" stroke-width="1"/><text x="344.5" y="1198" font-size="8" fill="#cfcfcf" text-anchor="middle">2</text><line x1="344.5" y1="1200" x2="344.5" y2="1310" stroke="#9c9c9c" stroke-width="1"/><text x="497.5" y="1198" font-size="8" fill="#cfcfcf" text-anchor="middle">3</text><line x1="497.5" y1="1200" x2="497.5" y2="1310" stroke="#9c9c9c" stroke-width="1"/><text x="650.5" y="1198" font-size="8" fill="#cfcfcf" text-anchor="middle">4</text><line x1="650.5" y1="1200" x2="650.5" y2="1310" stroke="#9c9c9c" stroke-width="1"/><text x="803.5" y="1198" font-size="8" fill="#cfcfcf" text-anchor="middle">5</text><line x1="803.5" y1="1200" x2="803.5" y2="1310" stroke="#9c9c9c" stroke-width="1"/><text x="955.5" y="1198" font-size="8" fill="#cfcfcf" text-anchor="middle">6</text><line x1="955.5" y1="1200" x2="955.5" y2="1310" stroke="#9c9c9c" stroke-width="1"/><text x="1108.5" y="1198" font-size="8" fill="#cfcfcf" text-anchor="middle">7</text><line x1="1108.5" y1="1200" x2="1108.5" y2="1310" stroke="#9c9c9c" stroke-width="1"/><text x="1261.5" y="1198" font-size="8" fill="#cfcfcf" text-anchor="middle">8</text><line x1="1261.5" y1="1200" x2="1261.5" y2="1310" stroke="#9c9c9c" stroke-width="1"/><text x="1414.5" y="1198" font-size="8" fill="#cfcfcf" text-anchor="middle">9</text><line x1="1414.5" y1="1200" x2="1414.5" y2="1310" stroke="#9c9c9c" stroke-width="1"/><text x="1567.5" y="1198" font-size="8" fill="#cfcfcf" text-anchor="middle">10</text><line x1="1567.5" y1="1200" x2="1567.5" y2="1310" stroke="#9c9c9c" stroke-width="1"/><text x="1720.5" y="1198" font-size="8" fill="#cfcfcf" text-anchor="middle">11</text><line x1="1720.5" y1="1200" x2="1720.5" y2="1310" stroke="#9c9c9c" stroke-width="1"/><text x="1873.5" y="1198" font-size="8" fill="#cfcfcf" text-anchor="middle">12</text><line x1="1873.5" y1="1200" x2="1873.5" y2="1310" stroke="#9c9c9c" stroke-width="1"/><text x="2026.5" y="1198" font-size="8" fill="#cfcfcf" text-anchor="middle">13</text><line x1="2026.5" y1="1200" x2="2026.5" y2="1310" stroke="#9c9c9c" stroke-width="1"/></svg><div style="position:absolute;left:38px;top:1176px;width:1px;height:13px;background:#aaaaaa;"></div><div style="position:absolute;left:32px;top:1310px;width:2009px;height:12px;background:#1e1e1e;"></div><div style="position:absolute;left:40px;top:1311px;width:27px;height:11px;background:#2a2a2a;"></div><div style="position:absolute;left:35px;top:1312px;font-size:5px;line-height:7px;color:#6a6a6a;white-space:nowrap;">&#9664;</div><div style="position:absolute;left:2030px;top:1312px;font-size:5px;line-height:7px;color:#6a6a6a;white-space:nowrap;">&#9654;</div><div style="position:absolute;left:2041px;top:1166px;width:12px;height:145px;background:#1e1e1e;"></div><div style="position:absolute;left:2044px;top:1168px;font-size:5px;line-height:7px;color:#6a6a6a;white-space:nowrap;">&#9650;</div><div style="position:absolute;left:2044px;top:1299px;font-size:5px;line-height:7px;color:#6a6a6a;white-space:nowrap;">&#9660;</div><div style="position:absolute;left:2056px;top:1311px;width:497px;height:11px;background:#1e1e1e;"></div><div style="position:absolute;left:2056px;top:1311px;width:14px;height:11px;background:#2a2a2a;"></div><div style="position:absolute;left:3px;top:1324px;font-size:7.6px;line-height:9.6px;color:#d0d0d0;white-space:nowrap;">Click to select a bone (hold &lt;shift&gt; or &lt;ctrl/cmd&gt; to select more than one bone)</div><div style="position:absolute;left:2525px;top:1324px;font-size:7px;line-height:9px;color:#d0d0d0;white-space:nowrap;">Frame: 0</div>
<svg style="position:absolute;left:0;top:0" width="2560" height="1335" viewBox="0 0 2560 1335" font-family="Liberation Sans, sans-serif"><rect x="182.5" y="77.5" width="1766" height="993.5" fill="none" stroke="#c2c2d2" stroke-width="1"/><path d="M232.5,78 L182.5,78 L182.5,128" fill="none" stroke="#9a97c2" stroke-width="2.6"/><path d="M1898.5,78 L1948.5,78 L1948.5,128" fill="none" stroke="#9a97c2" stroke-width="2.6"/><path d="M232.5,1071 L182.5,1071 L182.5,1021" fill="none" stroke="#9a97c2" stroke-width="2.6"/><path d="M1898.5,1071 L1948.5,1071 L1948.5,1021" fill="none" stroke="#9a97c2" stroke-width="2.6"/><ellipse cx="544" cy="358.5" rx="9" ry="11" fill="#d6895a" stroke="#121212" stroke-width="2.3"/><ellipse cx="629" cy="358.5" rx="9" ry="11" fill="#d6895a" stroke="#121212" stroke-width="2.3"/><path d="M571,395 L572,412 L603,412 L603,395 Z" fill="#d6895a" stroke="#121212" stroke-width="0" stroke-linejoin="round" stroke-linecap="round" /><path d="M549,330 Q549,390 573,402 Q587,408 601,402 Q625,390 625,330 Z" fill="#d6895a" stroke="#121212" stroke-width="2.3" stroke-linejoin="round" stroke-linecap="round" /><line x1="572.0" y1="402.0" x2="572.0" y2="410.0" stroke="#121212" stroke-width="1.6" stroke-linecap="round" /><line x1="602.0" y1="402.0" x2="602.0" y2="410.0" stroke="#121212" stroke-width="1.6" stroke-linecap="round" /><polygon points="560.0,423.0 569.5,406.5 604.0,406.5 614.0,423.0" fill="#ffffff" stroke="#121212" stroke-width="2.3" stroke-linejoin="round" /><path d="M569,421 Q587,416 605,421" fill="none" stroke="#121212" stroke-width="1.6" stroke-linejoin="round" stroke-linecap="round" /><path d="M534.5,630 L638.5,630 L634.0,930 L610.0,930 L606.8,689 L566.3,689 L563.4,930 L539.0,930 Z" fill="#c9b18a" stroke="#121212" stroke-width="2.3" stroke-linejoin="round" stroke-linecap="round" /><path d="M534.5,625 Q586.5,617 638.5,625 L638.5,636 Q586.5,629 534.5,636 Z" fill="#875a3b" stroke="#121212" stroke-width="2.3" stroke-linejoin="round" stroke-linecap="round" /><path d="M533.8,930 Q534.0,926 539.0,926 L566.0,926 Q570.8,926 570.8,931 L570.8,947 Q570.8,950 566.0,950 L539.0,949.5 Q533.8,949 533.8,946 Z" fill="#c9b18a" stroke="#121212" stroke-width="2.3" stroke-linejoin="round" stroke-linecap="round" /><line x1="567.0" y1="930.0" x2="567.0" y2="948.0" stroke="#121212" stroke-width="2" stroke-linecap="round" /><path d="M639.3,930 Q639.0,926 634.0,926 L607.0,926 Q602.2,926 602.2,931 L602.2,947 Q602.2,950 607.0,950 L634.0,949.5 Q639.3,949 639.3,946 Z" fill="#c9b18a" stroke="#121212" stroke-width="2.3" stroke-linejoin="round" stroke-linecap="round" /><line x1="606.0" y1="930.0" x2="606.0" y2="948.0" stroke="#121212" stroke-width="2" stroke-linecap="round" /><path d="M536.2,950 L565.7,950 L566.2,985 Q565.2,991 552.2,991.5 Q530.2,991 522.2,983 Q525.2,962 536.2,950 Z" fill="#87472e" stroke="#121212" stroke-width="2.3" stroke-linejoin="round" stroke-linecap="round" /><path d="M523.7,977 Q544.2,986 566.2,980.5" fill="none" stroke="#121212" stroke-width="2.6" stroke-linejoin="round" stroke-linecap="round" /><path d="M637.0,950 L607.5,950 L607.0,985 Q608.0,991 621.0,991.5 Q643.0,991 651.0,983 Q648.0,962 637.0,950 Z" fill="#87472e" stroke="#121212" stroke-width="2.3" stroke-linejoin="round" stroke-linecap="round" /><path d="M649.5,977 Q629.0,986 607.0,980.5" fill="none" stroke="#121212" stroke-width="2.6" stroke-linejoin="round" stroke-linecap="round" /><path d="M554.0,423.0 L619.0,423.0 Q627.9,423 635.5,430.6 L790.6,583.5 L772.4,601.7 L640.0,474.0 L638.5,625.0 Q586.5,613 534.5,625.0 L533.0,474.0 L400.6,601.7 L382.4,583.5 L537.5,430.6 Q545.1,423 554.0,423 Z" fill="#6c7fae" stroke="#121212" stroke-width="2.3" stroke-linejoin="round" stroke-linecap="round" /><line x1="533.0" y1="458.0" x2="534.5" y2="625.0" stroke="#121212" stroke-width="2.6" stroke-linecap="round" /><line x1="640.0" y1="458.0" x2="638.5" y2="625.0" stroke="#121212" stroke-width="2.6" stroke-linecap="round" /><polygon points="379.9,581.0 403.1,604.2 390.0,617.3 366.8,594.1" fill="#ffffff" stroke="#121212" stroke-width="2.3" stroke-linejoin="round" /><path d="M367.3,597.3 L325.2,631.7 Q320.8,635.7 325.0,639.3 L327.7,640.5 Q327.2,645.6 333.5,647.0 L336.6,645.8 Q339.2,650.6 342.9,648.6 Q363.6,633.3 384.9,615.5 Z" fill="#d6895a" stroke="#121212" stroke-width="2.3" stroke-linejoin="round" stroke-linecap="round" /><line x1="354.4" y1="617.8" x2="327.6" y2="640.1" stroke="#121212" stroke-width="2.3" stroke-linecap="round" /><line x1="361.9" y1="623.6" x2="336.6" y2="645.7" stroke="#121212" stroke-width="2.3" stroke-linecap="round" /><polygon points="793.1,581.0 769.9,604.2 783.0,617.3 806.2,594.1" fill="#ffffff" stroke="#121212" stroke-width="2.3" stroke-linejoin="round" /><path d="M805.7,597.3 L847.8,631.7 Q852.2,635.7 848.0,639.3 L845.3,640.5 Q845.8,645.6 839.5,647.0 L836.4,645.8 Q833.8,650.6 830.1,648.6 Q809.4,633.3 788.1,615.5 Z" fill="#d6895a" stroke="#121212" stroke-width="2.3" stroke-linejoin="round" stroke-linecap="round" /><line x1="818.6" y1="617.8" x2="845.4" y2="640.1" stroke="#121212" stroke-width="2.3" stroke-linecap="round" /><line x1="811.1" y1="623.6" x2="836.4" y2="645.7" stroke="#121212" stroke-width="2.3" stroke-linecap="round" /><line x1="587.0" y1="426.0" x2="587.0" y2="617.0" stroke="#5a6c9a" stroke-width="1" stroke-linecap="round" /><path d="M551,452 L560,446 L614,446 L623,452" fill="none" stroke="#5a6c9a" stroke-width="1" stroke-linejoin="round" stroke-linecap="round" /><path d="M541.0,315.6 A6.2,6.2 0 0 1 534.5,306.0 A21.1,21.1 0 0 1 533.5,268.0 A32.0,32.0 0 0 1 569.0,238.0 A37.5,37.5 0 0 1 615.0,243.0 A22.3,22.3 0 0 1 642.0,264.0 A18.0,18.0 0 0 1 642.0,298.0 A10.7,10.7 0 0 1 633.0,315.0 C626,345 622,378 603,393 Q587,400 571,393 C553,378 549,345 541,315.6 Z" fill="#3c3431" stroke="#121212" stroke-width="2.3" stroke-linejoin="round" stroke-linecap="round" /><path d="M1545.4,438 L1401.6,585.3 L1421.3,603.3 L1568.7,452 A12.5,12.5 0 0 0 1545.4,438 Z" fill="#6c7fae" stroke="#121212" stroke-width="2.3" stroke-linejoin="round" stroke-linecap="round" /><path d="M1708.6,438 L1852.4,585.3 L1832.7,603.3 L1685.3,452 A12.5,12.5 0 0 1 1708.6,438 Z" fill="#6c7fae" stroke="#121212" stroke-width="2.3" stroke-linejoin="round" stroke-linecap="round" /><polygon points="1399.0,582.9 1423.9,605.7 1410.8,618.7 1385.9,596.0" fill="#ffffff" stroke="#121212" stroke-width="2.3" stroke-linejoin="round" /><path d="M1387.3,599.0 L1345.2,633.4 Q1340.7,637.4 1345.0,641.0 L1347.7,642.2 Q1347.1,647.3 1353.5,648.7 L1356.5,647.5 Q1359.1,652.3 1362.8,650.3 Q1383.5,635.0 1404.8,617.2 Z" fill="#d6895a" stroke="#121212" stroke-width="2.3" stroke-linejoin="round" stroke-linecap="round" /><line x1="1374.4" y1="619.5" x2="1347.5" y2="641.8" stroke="#121212" stroke-width="2.3" stroke-linecap="round" /><line x1="1381.9" y1="625.3" x2="1356.5" y2="647.4" stroke="#121212" stroke-width="2.3" stroke-linecap="round" /><polygon points="1855.0,582.9 1830.1,605.7 1843.2,618.7 1868.1,596.0" fill="#ffffff" stroke="#121212" stroke-width="2.3" stroke-linejoin="round" /><path d="M1866.7,599.0 L1908.8,633.4 Q1913.3,637.4 1909.0,641.0 L1906.3,642.2 Q1906.9,647.3 1900.5,648.7 L1897.5,647.5 Q1894.9,652.3 1891.2,650.3 Q1870.5,635.0 1849.2,617.2 Z" fill="#d6895a" stroke="#121212" stroke-width="2.3" stroke-linejoin="round" stroke-linecap="round" /><line x1="1879.6" y1="619.5" x2="1906.5" y2="641.8" stroke="#121212" stroke-width="2.3" stroke-linecap="round" /><line x1="1872.1" y1="625.3" x2="1897.5" y2="647.4" stroke="#121212" stroke-width="2.3" stroke-linecap="round" /><path d="M1081.0,630 L1185.0,630 L1181.5,930 L1156.0,930 L1153.3,689 L1112.8,689 L1108.5,930 L1086.5,930 Z" fill="#c9b18a" stroke="#121212" stroke-width="2.3" stroke-linejoin="round" stroke-linecap="round" /><rect x="1080.0" y="923.5" width="37" height="26" rx="2.5" fill="#c9b18a" stroke="#121212" stroke-width="2.3"/><rect x="1148.0" y="923.5" width="37" height="26" rx="2.5" fill="#c9b18a" stroke="#121212" stroke-width="2.3"/><line x1="1112.5" y1="926.0" x2="1112.5" y2="947.0" stroke="#121212" stroke-width="2" stroke-linecap="round" /><line x1="1152.5" y1="926.0" x2="1152.5" y2="947.0" stroke="#121212" stroke-width="2" stroke-linecap="round" /><path d="M1082.0,950 L1112.0,950 L1112.0,985 Q1112.0,1000 1097.0,1001 Q1077.0,1001 1073.0,993 Q1071.0,975 1082.0,950 Z" fill="#87472e" stroke="#121212" stroke-width="2.3" stroke-linejoin="round" stroke-linecap="round" /><path d="M1075.0,984 Q1094.0,992 1112.0,987" fill="none" stroke="#121212" stroke-width="2.4" stroke-linejoin="round" stroke-linecap="round" /><line x1="1088.0" y1="962.0" x2="1106.0" y2="960.0" stroke="#121212" stroke-width="1.6" stroke-linecap="round" /><line x1="1088.0" y1="969.0" x2="1106.0" y2="967.0" stroke="#121212" stroke-width="1.6" stroke-linecap="round" /><line x1="1088.0" y1="976.0" x2="1106.0" y2="974.0" stroke="#121212" stroke-width="1.6" stroke-linecap="round" /><path d="M1185.0,950 L1155.0,950 L1155.0,985 Q1155.0,1000 1170.0,1001 Q1190.0,1001 1194.0,993 Q1196.0,975 1185.0,950 Z" fill="#87472e" stroke="#121212" stroke-width="2.3" stroke-linejoin="round" stroke-linecap="round" /><path d="M1192.0,984 Q1173.0,992 1155.0,987" fill="none" stroke="#121212" stroke-width="2.4" stroke-linejoin="round" stroke-linecap="round" /><line x1="1179.0" y1="962.0" x2="1161.0" y2="960.0" stroke="#121212" stroke-width="1.6" stroke-linecap="round" /><line x1="1179.0" y1="969.0" x2="1161.0" y2="967.0" stroke="#121212" stroke-width="1.6" stroke-linecap="round" /><line x1="1179.0" y1="976.0" x2="1161.0" y2="974.0" stroke="#121212" stroke-width="1.6" stroke-linecap="round" /><path d="M1100.5,423.0 L1165.5,423.0 Q1174.4,423 1182.0,430.6 L1337.1,583.5 L1318.9,601.7 L1186.5,474.0 L1185.0,625.0 Q1133.0,639 1081.0,625.0 L1079.5,474.0 L947.1,601.7 L928.9,583.5 L1084.0,430.6 Q1091.6,423 1100.5,423 Z" fill="#6c7fae" stroke="#121212" stroke-width="2.3" stroke-linejoin="round" stroke-linecap="round" /><line x1="1079.5" y1="470.0" x2="1081.0" y2="625.0" stroke="#121212" stroke-width="2.6" stroke-linecap="round" /><line x1="1186.5" y1="470.0" x2="1185.0" y2="625.0" stroke="#121212" stroke-width="2.6" stroke-linecap="round" /><polygon points="926.4,581.0 949.6,604.2 936.5,617.3 913.3,594.1" fill="#ffffff" stroke="#121212" stroke-width="2.3" stroke-linejoin="round" /><path d="M913.8,597.3 L871.7,631.7 Q867.3,635.7 871.5,639.3 L874.2,640.5 Q873.7,645.6 880.0,647.0 L883.1,645.8 Q885.7,650.6 889.4,648.6 Q910.1,633.3 931.4,615.5 Z" fill="#d6895a" stroke="#121212" stroke-width="2.3" stroke-linejoin="round" stroke-linecap="round" /><line x1="900.9" y1="617.8" x2="874.1" y2="640.1" stroke="#121212" stroke-width="2.3" stroke-linecap="round" /><line x1="908.4" y1="623.6" x2="883.1" y2="645.7" stroke="#121212" stroke-width="2.3" stroke-linecap="round" /><polygon points="1339.6,581.0 1316.4,604.2 1329.5,617.3 1352.7,594.1" fill="#ffffff" stroke="#121212" stroke-width="2.3" stroke-linejoin="round" /><path d="M1352.2,597.3 L1394.3,631.7 Q1398.7,635.7 1394.5,639.3 L1391.8,640.5 Q1392.3,645.6 1386.0,647.0 L1382.9,645.8 Q1380.3,650.6 1376.6,648.6 Q1355.9,633.3 1334.6,615.5 Z" fill="#d6895a" stroke="#121212" stroke-width="2.3" stroke-linejoin="round" stroke-linecap="round" /><line x1="1365.1" y1="617.8" x2="1391.9" y2="640.1" stroke="#121212" stroke-width="2.3" stroke-linecap="round" /><line x1="1357.6" y1="623.6" x2="1382.9" y2="645.7" stroke="#121212" stroke-width="2.3" stroke-linecap="round" /><circle cx="1090.5" cy="358" r="9" fill="#d6895a" stroke="#121212" stroke-width="2.3"/><line x1="1087.0" y1="355.0" x2="1092.0" y2="361.0" stroke="#121212" stroke-width="1.8" stroke-linecap="round" /><line x1="1092.0" y1="355.0" x2="1087.0" y2="361.0" stroke="#121212" stroke-width="1.8" stroke-linecap="round" /><circle cx="1175.5" cy="358" r="9" fill="#d6895a" stroke="#121212" stroke-width="2.3"/><line x1="1174.0" y1="355.0" x2="1179.0" y2="361.0" stroke="#121212" stroke-width="1.8" stroke-linecap="round" /><line x1="1179.0" y1="355.0" x2="1174.0" y2="361.0" stroke="#121212" stroke-width="1.8" stroke-linecap="round" /><path d="M1117,400 L1117.7,407 L1133,446 L1149,407 L1149,400 Z" fill="#d6895a" stroke="#121212" stroke-width="2.3" stroke-linejoin="round" stroke-linecap="round" /><polygon points="1116.3,406.4 1096.3,440.5 1132.0,446.2" fill="#ffffff" stroke="#121212" stroke-width="2.3" stroke-linejoin="round" /><polygon points="1149.7,406.4 1169.6,440.5 1134.0,446.2" fill="#ffffff" stroke="#121212" stroke-width="2.3" stroke-linejoin="round" /><path d="M1111,438 L1119,436 L1122,440" fill="none" stroke="#121212" stroke-width="2" stroke-linejoin="round" stroke-linecap="round" /><path d="M1155,438 L1147,436 L1144,440" fill="none" stroke="#121212" stroke-width="2" stroke-linejoin="round" stroke-linecap="round" /><path d="M1096,441 Q1133,462 1170,441" fill="none" stroke="#121212" stroke-width="2.6" stroke-linejoin="round" stroke-linecap="round" /><path d="M1100,446 Q1133,466 1166,446" fill="none" stroke="#4e6090" stroke-width="1.2" stroke-linejoin="round" stroke-linecap="round" /><line x1="1104.0" y1="424.0" x2="1099.0" y2="436.0" stroke="#121212" stroke-width="1.5" stroke-linecap="round" /><line x1="1162.0" y1="424.0" x2="1167.0" y2="436.0" stroke="#121212" stroke-width="1.5" stroke-linecap="round" /><path d="M1096,285 L1096,355 C1096,393 1113,408 1133,408 C1153,408 1170,393 1170,355 L1170,285 Z" fill="#d6895a" stroke="#121212" stroke-width="2.3" stroke-linejoin="round" stroke-linecap="round" /><path d="M1096,346 L1082,310  A23.7,23.7 0 0 1 1077.0,268.0 A22.8,22.8 0 0 1 1104.0,241.6 A44.7,44.7 0 0 1 1157.8,243.4 A21.4,21.4 0 0 1 1186.6,263.0 A21.6,21.6 0 0 1 1192.0,299.0 A17.5,17.5 0 0 1 1176.0,320.0 L1170,346 L1168,295 Q1133,282 1099,295 Z" fill="#3c3431" stroke="#121212" stroke-width="2.3" stroke-linejoin="round" stroke-linecap="round" /><circle cx="1119" cy="340" r="13" fill="#fff" stroke="#121212" stroke-width="2.3"/><circle cx="1117" cy="341" r="2.6" fill="#121212"/><circle cx="1146" cy="340" r="13" fill="#fff" stroke="#121212" stroke-width="2.3"/><circle cx="1142" cy="341" r="2.6" fill="#121212"/><line x1="1107.0" y1="319.0" x2="1121.0" y2="315.0" stroke="#121212" stroke-width="4.5" stroke-linecap="round" /><line x1="1145.0" y1="315.0" x2="1159.0" y2="319.0" stroke="#121212" stroke-width="4.5" stroke-linecap="round" /><path d="M1129,361 Q1133,366 1137,361" fill="none" stroke="#121212" stroke-width="2" stroke-linejoin="round" stroke-linecap="round" /><path d="M1120,378 Q1133,384 1145,379" fill="none" stroke="#121212" stroke-width="2.4" stroke-linejoin="round" stroke-linecap="round" /><path d="M1082,625 Q1133,639 1184,625 L1184,639 Q1133,648 1082,639 Z" fill="#875a3b" stroke="#121212" stroke-width="2.6" stroke-linejoin="round" stroke-linecap="round" /><polygon points="1087.7,629.0 1127.4,632.5 1111.7,648.7" fill="#ffffff" stroke="#121212" stroke-width="2.6" stroke-linejoin="round" /><polygon points="1137.9,632.5 1179.0,629.0 1154.4,648.7" fill="#ffffff" stroke="#121212" stroke-width="2.6" stroke-linejoin="round" /><polygon points="1127.4,633.0 1137.9,633.0 1146.0,643.0 1120.0,643.0" fill="#8e9a97" stroke="#121212" stroke-width="0" stroke-linejoin="round" /><path d="M1082,625 Q1133,639 1184,625" fill="none" stroke="#121212" stroke-width="2.6" stroke-linejoin="round" stroke-linecap="round" /><path d="M1588,630 L1588,660 Q1578,663 1578,675 L1581.5,930 L1605,930 L1610,688 Z" fill="#c9b18a" stroke="#121212" stroke-width="2.3" stroke-linejoin="round" stroke-linecap="round" /><path d="M1649,688 L1647.5,930 L1679,930 L1680.6,672 Q1681,657 1668,656 Z" fill="#c9b18a" stroke="#121212" stroke-width="2.3" stroke-linejoin="round" stroke-linecap="round" /><path d="M1588,630 L1666,630 L1666,650 Q1668,683 1640,688 L1610,688 L1588,688 Q1580,688 1580,680 L1580,665 Q1588,662 1588,655 Z" fill="#c9b18a" stroke="#121212" stroke-width="0" stroke-linejoin="round" stroke-linecap="round" /><path d="M1666,630 L1666,650 Q1668,683 1640,688 L1610,688" fill="none" stroke="#121212" stroke-width="2.3" stroke-linejoin="round" stroke-linecap="round" /><line x1="1588.0" y1="630.0" x2="1588.0" y2="660.0" stroke="#121212" stroke-width="2.5" stroke-linecap="round" /><rect x="1573.6" y="928" width="36.4" height="22" rx="2" fill="#c9b18a" stroke="#121212" stroke-width="2.3"/><rect x="1646" y="928" width="35.5" height="22" rx="2" fill="#c9b18a" stroke="#121212" stroke-width="2.3"/><line x1="1583.0" y1="930.0" x2="1583.0" y2="948.0" stroke="#121212" stroke-width="2" stroke-linecap="round" /><line x1="1656.0" y1="930.0" x2="1656.0" y2="948.0" stroke="#121212" stroke-width="2" stroke-linecap="round" /><path d="M1649,950 L1678.9,950 C1683.0,962 1700.5,968 1721.1,973 C1732.4,977 1732.4,992 1714.9,996 L1650,996 Z" fill="#87472e" stroke="#121212" stroke-width="2.3" stroke-linejoin="round" stroke-linecap="round" /><path d="M1671.1,950 C1671.7,963 1682.0,973 1695.3,974 L1704.6,973.4" fill="none" stroke="#121212" stroke-width="2.4" stroke-linejoin="round" stroke-linecap="round" /><line x1="1674.8" y1="961.0" x2="1679.9" y2="957.0" stroke="#121212" stroke-width="2" stroke-linecap="round" /><line x1="1684.0" y1="968.5" x2="1687.1" y2="965.0" stroke="#121212" stroke-width="2" stroke-linecap="round" /><line x1="1695.3" y1="973.4" x2="1695.3" y2="968.5" stroke="#121212" stroke-width="2" stroke-linecap="round" /><path d="M1650,985.4 L1714.6,987.5 Q1724.2,986 1728.3,982" fill="none" stroke="#121212" stroke-width="2.4" stroke-linejoin="round" stroke-linecap="round" /><path d="M1579,950 L1608.0,950 C1612.0,962 1629.0,968 1649.0,973 C1660.0,977 1660.0,992 1643.0,996 L1580,996 Z" fill="#87472e" stroke="#121212" stroke-width="2.3" stroke-linejoin="round" stroke-linecap="round" /><path d="M1600.5,950 C1601.0,963 1611.0,973 1624.0,974 L1633.0,973.4" fill="none" stroke="#121212" stroke-width="2.4" stroke-linejoin="round" stroke-linecap="round" /><line x1="1604.0" y1="961.0" x2="1609.0" y2="957.0" stroke="#121212" stroke-width="2" stroke-linecap="round" /><line x1="1613.0" y1="968.5" x2="1616.0" y2="965.0" stroke="#121212" stroke-width="2" stroke-linecap="round" /><line x1="1624.0" y1="973.4" x2="1624.0" y2="968.5" stroke="#121212" stroke-width="2" stroke-linecap="round" /><path d="M1580,985.4 L1642.7,987.5 Q1652.0,986 1656.0,982" fill="none" stroke="#121212" stroke-width="2.4" stroke-linejoin="round" stroke-linecap="round" /><path d="M1588,615 L1588,460 Q1589,430 1610,424 L1650.6,445.7 L1663.3,478 L1665.7,629 Z" fill="#6c7fae" stroke="#121212" stroke-width="2.3" stroke-linejoin="round" stroke-linecap="round" /><path d="M1588,615 L1665.7,629 L1665.7,640 L1630,638.5 L1588,630 Z" fill="#875a3b" stroke="#121212" stroke-width="2.6" stroke-linejoin="round" stroke-linecap="round" /><polygon points="1629.0,628.0 1665.0,632.0 1648.0,647.0" fill="#ffffff" stroke="#121212" stroke-width="2.6" stroke-linejoin="round" /><polygon points="1660.0,632.0 1666.0,632.0 1666.0,645.0 1658.0,645.0" fill="#9a9a9a" stroke="#121212" stroke-width="0" stroke-linejoin="round" /><line x1="1588.0" y1="615.0" x2="1665.7" y2="629.0" stroke="#121212" stroke-width="3" stroke-linecap="round" /><path d="M1616,400 L1611,413 L1637,427 L1640,405 Z" fill="#d6895a" stroke="#121212" stroke-width="0" stroke-linejoin="round" stroke-linecap="round" /><polygon points="1611.0,413.0 1603.0,422.0 1642.0,446.0 1650.6,445.7 1637.0,427.0" fill="#ffffff" stroke="#121212" stroke-width="2.6" stroke-linejoin="round" /><path d="M1610,426 Q1630,440 1652,450" fill="none" stroke="#121212" stroke-width="2.4" stroke-linejoin="round" stroke-linecap="round" /><path d="M1612,432 Q1632,445 1655,456" fill="none" stroke="#4e6090" stroke-width="1.2" stroke-linejoin="round" stroke-linecap="round" /><path d="M1628,297 L1664,297 L1664,348 L1678,363 Q1681,369 1676,370 L1662,371 L1661,386 Q1656,403 1640,405 Q1615,402 1599,393 L1620,330 Z" fill="#d6895a" stroke="#121212" stroke-width="2.3" stroke-linejoin="round" stroke-linecap="round" /><path d="M1599.4,392.7 C1585,375 1578,330 1568.8,308  A36.4,36.4 0 0 1 1567.0,250.6 A15.0,15.0 0 0 1 1592.0,241.6 A37.5,37.5 0 0 1 1640.7,240.7 A14.4,14.4 0 0 1 1664.0,248.8 A28.2,28.2 0 0 1 1673.0,295.5 A6.1,6.1 0 0 1 1666.0,304.5 L1641,297 Q1628,299 1628,310 L1628,353 L1614,373 Z" fill="#3c3431" stroke="#121212" stroke-width="2.3" stroke-linejoin="round" stroke-linecap="round" /><circle cx="1611" cy="358.5" r="10" fill="#d6895a" stroke="#121212" stroke-width="2.3"/><line x1="1607.0" y1="355.0" x2="1614.0" y2="362.0" stroke="#121212" stroke-width="1.8" stroke-linecap="round" /><line x1="1614.0" y1="355.0" x2="1607.0" y2="362.0" stroke="#121212" stroke-width="1.8" stroke-linecap="round" /><circle cx="1658" cy="341" r="13" fill="#fff" stroke="#121212" stroke-width="2.3"/><circle cx="1655" cy="342" r="2.6" fill="#121212"/><line x1="1651.0" y1="318.0" x2="1664.0" y2="322.0" stroke="#121212" stroke-width="4" stroke-linecap="round" /><path d="M1651,379 Q1657,384 1664,382" fill="none" stroke="#121212" stroke-width="2.4" stroke-linejoin="round" stroke-linecap="round" /><circle cx="750" cy="268" r="34" fill="none" stroke="#e25a5a" stroke-width="1.4"/><circle cx="980" cy="338" r="12.5" fill="none" stroke="#e25a5a" stroke-width="1.4"/><circle cx="1020" cy="338" r="12.5" fill="none" stroke="#e25a5a" stroke-width="1.4"/><circle cx="1296" cy="268" r="34" fill="none" stroke="#e25a5a" stroke-width="1.4"/><circle cx="1516" cy="338" r="12.5" fill="none" stroke="#e25a5a" stroke-width="1.4"/><circle cx="686" cy="499" r="6" fill="#d4c670" stroke="#7cc4a0" stroke-width="1.4"/><line x1="680" y1="499" x2="692" y2="499" stroke="#7cc4a0" stroke-width="1.2"/><line x1="686" y1="493" x2="686" y2="505" stroke="#7cc4a0" stroke-width="1.2"/><circle cx="760" cy="837" r="6" fill="#d4c670" stroke="#7cc4a0" stroke-width="1.4"/><line x1="754" y1="837" x2="766" y2="837" stroke="#7cc4a0" stroke-width="1.2"/><line x1="760" y1="831" x2="760" y2="843" stroke="#7cc4a0" stroke-width="1.2"/><circle cx="1232" cy="316" r="6" fill="#d4c670" stroke="#7cc4a0" stroke-width="1.4"/><line x1="1226" y1="316" x2="1238" y2="316" stroke="#7cc4a0" stroke-width="1.2"/><line x1="1232" y1="310" x2="1232" y2="322" stroke="#7cc4a0" stroke-width="1.2"/><circle cx="1530" cy="233" r="6" fill="#d4c670" stroke="#7cc4a0" stroke-width="1.4"/><line x1="1524" y1="233" x2="1536" y2="233" stroke="#7cc4a0" stroke-width="1.2"/><line x1="1530" y1="227" x2="1530" y2="239" stroke="#7cc4a0" stroke-width="1.2"/><circle cx="1530" cy="499" r="6" fill="#d4c670" stroke="#7cc4a0" stroke-width="1.4"/><line x1="1524" y1="499" x2="1536" y2="499" stroke="#7cc4a0" stroke-width="1.2"/><line x1="1530" y1="493" x2="1530" y2="505" stroke="#7cc4a0" stroke-width="1.2"/><circle cx="1455" cy="837" r="6" fill="#d4c670" stroke="#7cc4a0" stroke-width="1.4"/><line x1="1449" y1="837" x2="1461" y2="837" stroke="#7cc4a0" stroke-width="1.2"/><line x1="1455" y1="831" x2="1455" y2="843" stroke="#7cc4a0" stroke-width="1.2"/><circle cx="1133" cy="1015" r="6" fill="#d4c670" stroke="#7cc4a0" stroke-width="1.4"/><line x1="1127" y1="1015" x2="1139" y2="1015" stroke="#7cc4a0" stroke-width="1.2"/><line x1="1133" y1="1009" x2="1133" y2="1021" stroke="#7cc4a0" stroke-width="1.2"/><path d="M700.3,365.0 L732.5,399.6 A1.8,1.8 0 0 0 735.0,397.1 Z" fill="#d6c878" stroke="#6cbf9c" stroke-width="0.8" opacity="1"/><text x="736.0" y="411.3" font-size="12" fill="#3bbdb2" stroke="#3bbdb2" stroke-width="0.25" letter-spacing="0">l_arm_IK_FK</text><path d="M735.5,400.0 L733.9,428.0 A1.6,1.6 0 0 0 737.1,428.0 Z" fill="#8ccaa4" stroke="#62b8a0" stroke-width="0.8" opacity="1"/><text x="736.0" y="441.3" font-size="12" fill="#3bbdb2" stroke="#3bbdb2" stroke-width="0.25" letter-spacing="0">l_shoulder_over_under</text><path d="M718.0,447.3 L732.7,464.2 A1.6,1.6 0 0 0 735.0,461.9 Z" fill="#8ccaa4" stroke="#62b8a0" stroke-width="0.8" opacity="1"/><text x="736.0" y="475.3" font-size="12" fill="#3bbdb2" stroke="#3bbdb2" stroke-width="0.25" letter-spacing="0">l_arm_over_under</text><path d="M735.5,475.0 L733.9,498.4 A1.6,1.6 0 0 0 737.1,498.4 Z" fill="#8ccaa4" stroke="#62b8a0" stroke-width="0.8" opacity="1"/><text x="736.0" y="510.3" font-size="12" fill="#3bbdb2" stroke="#3bbdb2" stroke-width="0.25" letter-spacing="0">l_elbow_angle</text><path d="M720.0,514.7 L732.8,533.2 A1.6,1.6 0 0 0 735.3,531.3 Z" fill="#8ccaa4" stroke="#62b8a0" stroke-width="0.8" opacity="1"/><text x="736.0" y="545.3" font-size="12" fill="#3bbdb2" stroke="#3bbdb2" stroke-width="0.25" letter-spacing="0">l_arm_curve_switch</text><path d="M735.5,545.0 L734.3,565.8 A1.2,1.2 0 0 0 736.7,565.8 Z" fill="none" stroke="#62b8a0" stroke-width="0.8" opacity="1"/><text x="736.0" y="580.3" font-size="12" fill="#3bbdb2" stroke="#3bbdb2" stroke-width="0.25" letter-spacing="0">l_cuff_angle</text><path d="M775.0,663.0 L806.5,697.0 A1.8,1.8 0 0 0 809.0,694.5 Z" fill="#d6c878" stroke="#6cbf9c" stroke-width="0.8" opacity="1"/><text x="810.0" y="709.3" font-size="12" fill="#3bbdb2" stroke="#3bbdb2" stroke-width="0.25" letter-spacing="0">l_leg_IK_FK</text><path d="M793.0,750.0 L806.7,766.0 A1.6,1.6 0 0 0 809.0,763.7 Z" fill="#8ccaa4" stroke="#62b8a0" stroke-width="0.8" opacity="1"/><text x="810.0" y="779.3" font-size="12" fill="#3bbdb2" stroke="#3bbdb2" stroke-width="0.25" letter-spacing="0">l_groin_line</text><path d="M809.5,812.0 L807.9,834.4 A1.6,1.6 0 0 0 811.1,834.4 Z" fill="#8ccaa4" stroke="#62b8a0" stroke-width="0.8" opacity="1"/><text x="810.0" y="848.3" font-size="12" fill="#3bbdb2" stroke="#3bbdb2" stroke-width="0.25" letter-spacing="0">l_knee_angle</text><path d="M809.5,848.0 L807.9,868.4 A1.6,1.6 0 0 0 811.1,868.4 Z" fill="#8ccaa4" stroke="#62b8a0" stroke-width="0.8" opacity="1"/><text x="810.0" y="883.3" font-size="12" fill="#3bbdb2" stroke="#3bbdb2" stroke-width="0.25" letter-spacing="0">l_pant_angle</text><path d="M793.0,890.0 L806.7,905.1 A1.6,1.6 0 0 0 808.9,902.7 Z" fill="#8ccaa4" stroke="#62b8a0" stroke-width="0.8" opacity="1"/><text x="810.0" y="918.3" font-size="12" fill="#3bbdb2" stroke="#3bbdb2" stroke-width="0.25" letter-spacing="0">l_leg_curve_switch</text><path d="M793.0,925.0 L806.7,940.1 A1.6,1.6 0 0 0 808.9,937.7 Z" fill="#8ccaa4" stroke="#62b8a0" stroke-width="0.8" opacity="1"/><text x="810.0" y="952.3" font-size="12" fill="#3bbdb2" stroke="#3bbdb2" stroke-width="0.25" letter-spacing="0">l_feet_turn</text><path d="M785.0,975.0 L807.3,977.5 A1.6,1.6 0 0 0 807.5,974.3 Z" fill="#8ccaa4" stroke="#62b8a0" stroke-width="0.8" opacity="1"/><text x="810.0" y="987.3" font-size="12" fill="#3bbdb2" stroke="#3bbdb2" stroke-width="0.25" letter-spacing="0">l_feet_swap</text><path d="M1579.4,155.7 L1577.8,178.1 A1.6,1.6 0 0 0 1581.0,178.1 Z" fill="#8ccaa4" stroke="#62b8a0" stroke-width="0.8" opacity="1"/><text x="1580.0" y="192.3" font-size="12" fill="#3bbdb2" stroke="#3bbdb2" stroke-width="0.25" letter-spacing="0">lower_body_turn</text><path d="M1579.4,190.0 L1577.8,213.3 A1.6,1.6 0 0 0 1581.0,213.3 Z" fill="#8ccaa4" stroke="#62b8a0" stroke-width="0.8" opacity="1"/><text x="1580.0" y="226.7" font-size="12" fill="#3bbdb2" stroke="#3bbdb2" stroke-width="0.25" letter-spacing="0">upper_body_turn</text><path d="M1561.8,232.9 L1577.1,250.0 A1.6,1.6 0 0 0 1579.4,247.7 Z" fill="#8ccaa4" stroke="#62b8a0" stroke-width="0.8" opacity="1"/><text x="1580.0" y="261.9" font-size="12" fill="#3bbdb2" stroke="#3bbdb2" stroke-width="0.25" letter-spacing="0">shoulder_order_swap</text><path d="M1563.8,266.0 L1577.1,282.0 A1.6,1.6 0 0 0 1579.4,279.7 Z" fill="#8ccaa4" stroke="#62b8a0" stroke-width="0.8" opacity="1"/><text x="1580.0" y="294.1" font-size="12" fill="#3bbdb2" stroke="#3bbdb2" stroke-width="0.25" letter-spacing="0">arm_order_swap</text><path d="M1563.0,295.7 L1577.1,311.1 A1.6,1.6 0 0 0 1579.3,308.7 Z" fill="#8ccaa4" stroke="#62b8a0" stroke-width="0.8" opacity="1"/><text x="1580.0" y="324.0" font-size="12" fill="#3bbdb2" stroke="#3bbdb2" stroke-width="0.25" letter-spacing="0">leg_order_swap</text><path d="M1545.0,366.0 L1576.5,399.6 A1.8,1.8 0 0 0 1579.0,397.1 Z" fill="#d6c878" stroke="#6cbf9c" stroke-width="0.8" opacity="1"/><text x="1580.0" y="411.3" font-size="12" fill="#3bbdb2" stroke="#3bbdb2" stroke-width="0.25" letter-spacing="0">r_arm_IK_FK</text><path d="M1579.5,400.0 L1577.9,428.0 A1.6,1.6 0 0 0 1581.1,428.0 Z" fill="#8ccaa4" stroke="#62b8a0" stroke-width="0.8" opacity="1"/><text x="1580.0" y="441.3" font-size="12" fill="#3bbdb2" stroke="#3bbdb2" stroke-width="0.25" letter-spacing="0">r_shoulder_over_under</text><path d="M1562.0,447.3 L1576.7,464.2 A1.6,1.6 0 0 0 1579.0,461.9 Z" fill="#8ccaa4" stroke="#62b8a0" stroke-width="0.8" opacity="1"/><text x="1580.0" y="475.3" font-size="12" fill="#3bbdb2" stroke="#3bbdb2" stroke-width="0.25" letter-spacing="0">r_arm_over_under</text><path d="M1579.5,475.0 L1577.9,498.4 A1.6,1.6 0 0 0 1581.1,498.4 Z" fill="#8ccaa4" stroke="#62b8a0" stroke-width="0.8" opacity="1"/><text x="1580.0" y="510.3" font-size="12" fill="#3bbdb2" stroke="#3bbdb2" stroke-width="0.25" letter-spacing="0">r_elbow_angle</text><path d="M1564.0,514.7 L1576.8,533.2 A1.6,1.6 0 0 0 1579.3,531.3 Z" fill="#8ccaa4" stroke="#62b8a0" stroke-width="0.8" opacity="1"/><text x="1580.0" y="545.3" font-size="12" fill="#3bbdb2" stroke="#3bbdb2" stroke-width="0.25" letter-spacing="0">r_arm_curve_switch</text><path d="M1579.5,545.0 L1577.9,565.4 A1.6,1.6 0 0 0 1581.1,565.4 Z" fill="#8ccaa4" stroke="#62b8a0" stroke-width="0.8" opacity="1"/><text x="1580.0" y="580.3" font-size="12" fill="#3bbdb2" stroke="#3bbdb2" stroke-width="0.25" letter-spacing="0">r_cuff_angle</text><path d="M1470.0,663.0 L1501.5,697.0 A1.8,1.8 0 0 0 1504.0,694.5 Z" fill="#d6c878" stroke="#6cbf9c" stroke-width="0.8" opacity="1"/><text x="1505.0" y="709.3" font-size="12" fill="#3bbdb2" stroke="#3bbdb2" stroke-width="0.25" letter-spacing="0">r_leg_IK_FK</text><path d="M1488.0,750.0 L1501.7,766.0 A1.6,1.6 0 0 0 1504.0,763.7 Z" fill="#8ccaa4" stroke="#62b8a0" stroke-width="0.8" opacity="1"/><text x="1505.0" y="779.3" font-size="12" fill="#3bbdb2" stroke="#3bbdb2" stroke-width="0.25" letter-spacing="0">r_groin_line</text><path d="M1504.5,812.0 L1502.9,834.4 A1.6,1.6 0 0 0 1506.1,834.4 Z" fill="#8ccaa4" stroke="#62b8a0" stroke-width="0.8" opacity="1"/><text x="1505.0" y="848.3" font-size="12" fill="#3bbdb2" stroke="#3bbdb2" stroke-width="0.25" letter-spacing="0">r_knee_angle</text><path d="M1504.5,848.0 L1502.9,868.4 A1.6,1.6 0 0 0 1506.1,868.4 Z" fill="#8ccaa4" stroke="#62b8a0" stroke-width="0.8" opacity="1"/><text x="1505.0" y="883.3" font-size="12" fill="#3bbdb2" stroke="#3bbdb2" stroke-width="0.25" letter-spacing="0">r_pant_angle</text><path d="M1488.0,890.0 L1501.7,905.1 A1.6,1.6 0 0 0 1503.9,902.7 Z" fill="#8ccaa4" stroke="#62b8a0" stroke-width="0.8" opacity="1"/><text x="1505.0" y="918.3" font-size="12" fill="#3bbdb2" stroke="#3bbdb2" stroke-width="0.25" letter-spacing="0">r_leg_curve_switch</text><path d="M1488.0,925.0 L1501.7,940.1 A1.6,1.6 0 0 0 1503.9,937.7 Z" fill="#8ccaa4" stroke="#62b8a0" stroke-width="0.8" opacity="1"/><text x="1505.0" y="952.3" font-size="12" fill="#3bbdb2" stroke="#3bbdb2" stroke-width="0.25" letter-spacing="0">r_feet_turn</text><path d="M1480.0,975.0 L1502.3,977.5 A1.6,1.6 0 0 0 1502.5,974.3 Z" fill="#8ccaa4" stroke="#62b8a0" stroke-width="0.8" opacity="1"/><text x="1505.0" y="987.3" font-size="12" fill="#3bbdb2" stroke="#3bbdb2" stroke-width="0.25" letter-spacing="0">r_feet_swap</text><path d="M1232.0,257.0 L1230.4,279.4 A1.6,1.6 0 0 0 1233.6,279.4 Z" fill="#8ccaa4" stroke="#62b8a0" stroke-width="0.8" opacity="1"/><text x="1232.0" y="292.3" font-size="12" fill="#3bbdb2" stroke="#3bbdb2" stroke-width="0.25" letter-spacing="0">head_squash</text><polygon points="1133.0,290.0 1131.0,350.0 1133.0,410.0 1135.0,350.0" fill="none" stroke="#35c0c0" stroke-width="1" opacity="0.9"/><polygon points="1133.0,410.0 1130.5,423.5 1133.0,455.0 1135.5,423.5" fill="none" stroke="#35c0c0" stroke-width="1" opacity="0.9"/><polygon points="1133.0,455.0 1130.0,474.5 1133.0,520.0 1136.0,474.5" fill="none" stroke="#35c0c0" stroke-width="1" opacity="0.9"/><polygon points="1133.0,520.0 1130.0,547.0 1133.0,655.0 1136.0,547.0" fill="none" stroke="#35c0c0" stroke-width="1" opacity="0.9"/><polygon points="1100.0,440.0 1079.5,455.4 1006.0,526.0 1082.9,459.0" fill="none" stroke="#35c0c0" stroke-width="1" opacity="0.9"/><polygon points="1006.0,526.0 990.6,539.1 938.0,600.0 994.2,542.5" fill="none" stroke="#35c0c0" stroke-width="1" opacity="0.9"/><polygon points="1090.0,440.0 1006.9,519.9 926.0,602.0 1009.1,522.1" fill="none" stroke="#35c0c0" stroke-width="1" opacity="0.6"/><circle cx="1068" cy="464" r="6" fill="#3cbcb6" opacity="0.85"/><circle cx="1006" cy="526" r="5" fill="none" stroke="#35c0c0" stroke-width="1"/><path d="M1055.0,526.0 L1010.0,524.0 A2.0,2.0 0 0 0 1010.0,528.0 Z" fill="#5fd29a" stroke="#5fd29a" stroke-width="0.8" opacity="0.85"/><path d="M981.0,601.0 L939.0,599.0 A2.0,2.0 0 0 0 939.0,603.0 Z" fill="#5fd29a" stroke="#5fd29a" stroke-width="0.8" opacity="0.85"/><circle cx="937" cy="601" r="5" fill="none" stroke="#35c0c0" stroke-width="1"/><polygon points="1133.0,430.0 1122.1,431.6 1098.0,440.0 1122.9,434.4" fill="none" stroke="#35c0c0" stroke-width="1" opacity="0.9"/><polygon points="1097.0,672.0 1094.0,682.6 1097.0,805.0 1100.0,682.6" fill="none" stroke="#7cc8a8" stroke-width="1.2" opacity="0.9"/><polygon points="1097.0,805.0 1094.5,822.0 1097.0,975.0 1099.5,822.0" fill="none" stroke="#35c0c0" stroke-width="1" opacity="0.9"/><circle cx="1097" cy="805" r="6" fill="#3cbcb6" opacity="0.85"/><circle cx="1097" cy="975" r="6.5" fill="#3cbcb6" opacity="0.85"/><polygon points="1070.0,940.0 1091.5,941.2 1113.0,940.0 1091.5,938.8" fill="none" stroke="#35c0c0" stroke-width="1" opacity="0.9"/><polygon points="1097.0,975.0 1090.1,980.9 1078.0,998.0 1092.5,982.9" fill="none" stroke="#35c0c0" stroke-width="1" opacity="0.9"/><polygon points="1166.0,440.0 1183.1,459.0 1260.0,526.0 1186.5,455.4" fill="none" stroke="#35c0c0" stroke-width="1" opacity="0.9"/><polygon points="1260.0,526.0 1271.8,542.5 1328.0,600.0 1275.4,539.1" fill="none" stroke="#35c0c0" stroke-width="1" opacity="0.9"/><polygon points="1176.0,440.0 1256.9,522.1 1340.0,602.0 1259.1,519.9" fill="none" stroke="#35c0c0" stroke-width="1" opacity="0.6"/><circle cx="1198" cy="464" r="6" fill="#3cbcb6" opacity="0.85"/><circle cx="1260" cy="526" r="5" fill="none" stroke="#35c0c0" stroke-width="1"/><path d="M1211.0,526.0 L1256.0,528.0 A2.0,2.0 0 0 0 1256.0,524.0 Z" fill="#5fd29a" stroke="#5fd29a" stroke-width="0.8" opacity="0.85"/><path d="M1285.0,601.0 L1327.0,603.0 A2.0,2.0 0 0 0 1327.0,599.0 Z" fill="#5fd29a" stroke="#5fd29a" stroke-width="0.8" opacity="0.85"/><circle cx="1329" cy="601" r="5" fill="none" stroke="#35c0c0" stroke-width="1"/><polygon points="1133.0,430.0 1143.1,434.4 1168.0,440.0 1143.9,431.6" fill="none" stroke="#35c0c0" stroke-width="1" opacity="0.9"/><polygon points="1169.0,672.0 1166.0,682.6 1169.0,805.0 1172.0,682.6" fill="none" stroke="#7cc8a8" stroke-width="1.2" opacity="0.9"/><polygon points="1169.0,805.0 1166.5,822.0 1169.0,975.0 1171.5,822.0" fill="none" stroke="#35c0c0" stroke-width="1" opacity="0.9"/><circle cx="1169" cy="805" r="6" fill="#3cbcb6" opacity="0.85"/><circle cx="1169" cy="975" r="6.5" fill="#3cbcb6" opacity="0.85"/><polygon points="1196.0,940.0 1174.5,938.8 1153.0,940.0 1174.5,941.2" fill="none" stroke="#35c0c0" stroke-width="1" opacity="0.9"/><polygon points="1169.0,975.0 1173.5,982.9 1188.0,998.0 1175.9,980.9" fill="none" stroke="#35c0c0" stroke-width="1" opacity="0.9"/><polygon points="1168.0,440.0 1174.8,450.4 1256.0,522.0 1178.8,446.0" fill="none" stroke="#d8404a" stroke-width="1.4" opacity="0.9"/><line x1="1167.7" y1="378" x2="1174" y2="441" stroke="#e04a50" stroke-width="1"/><line x1="1133" y1="408" x2="1172" y2="440" stroke="#e04a50" stroke-width="1.4"/><polygon points="1133.0,637.0 1151.3,639.0 1316.0,637.0 1151.3,635.0" fill="none" stroke="#35c0c0" stroke-width="1" opacity="0.9"/><path d="M939,663.6 L1003,660 Q1012,660 1014,666 L1003,668 Z" fill="none" stroke="#35c0c0" stroke-width="1"/><text x="1018.0" y="669.9" font-size="8" fill="#3bbdb2" stroke="#3bbdb2" stroke-width="0.25" letter-spacing="0">l_prop</text><path d="M1327,663.6 L1263,660 Q1254,660 1250,666 L1263,668 Z" fill="none" stroke="#35c0c0" stroke-width="1"/><text x="1226.0" y="669.9" font-size="8" fill="#3bbdb2" stroke="#3bbdb2" stroke-width="0.25" letter-spacing="0">r_prop</text><line x1="1133" y1="928" x2="1133" y2="1012" stroke="#d8a8a0" stroke-width="1.2"/><path d="M1124,937 L1133,927 L1142,937" fill="none" stroke="#d8a8a0" stroke-width="1.2"/><line x1="1082" y1="975" x2="1190" y2="975" stroke="#d8b0a8" stroke-width="1.2"/></svg></body></html>
